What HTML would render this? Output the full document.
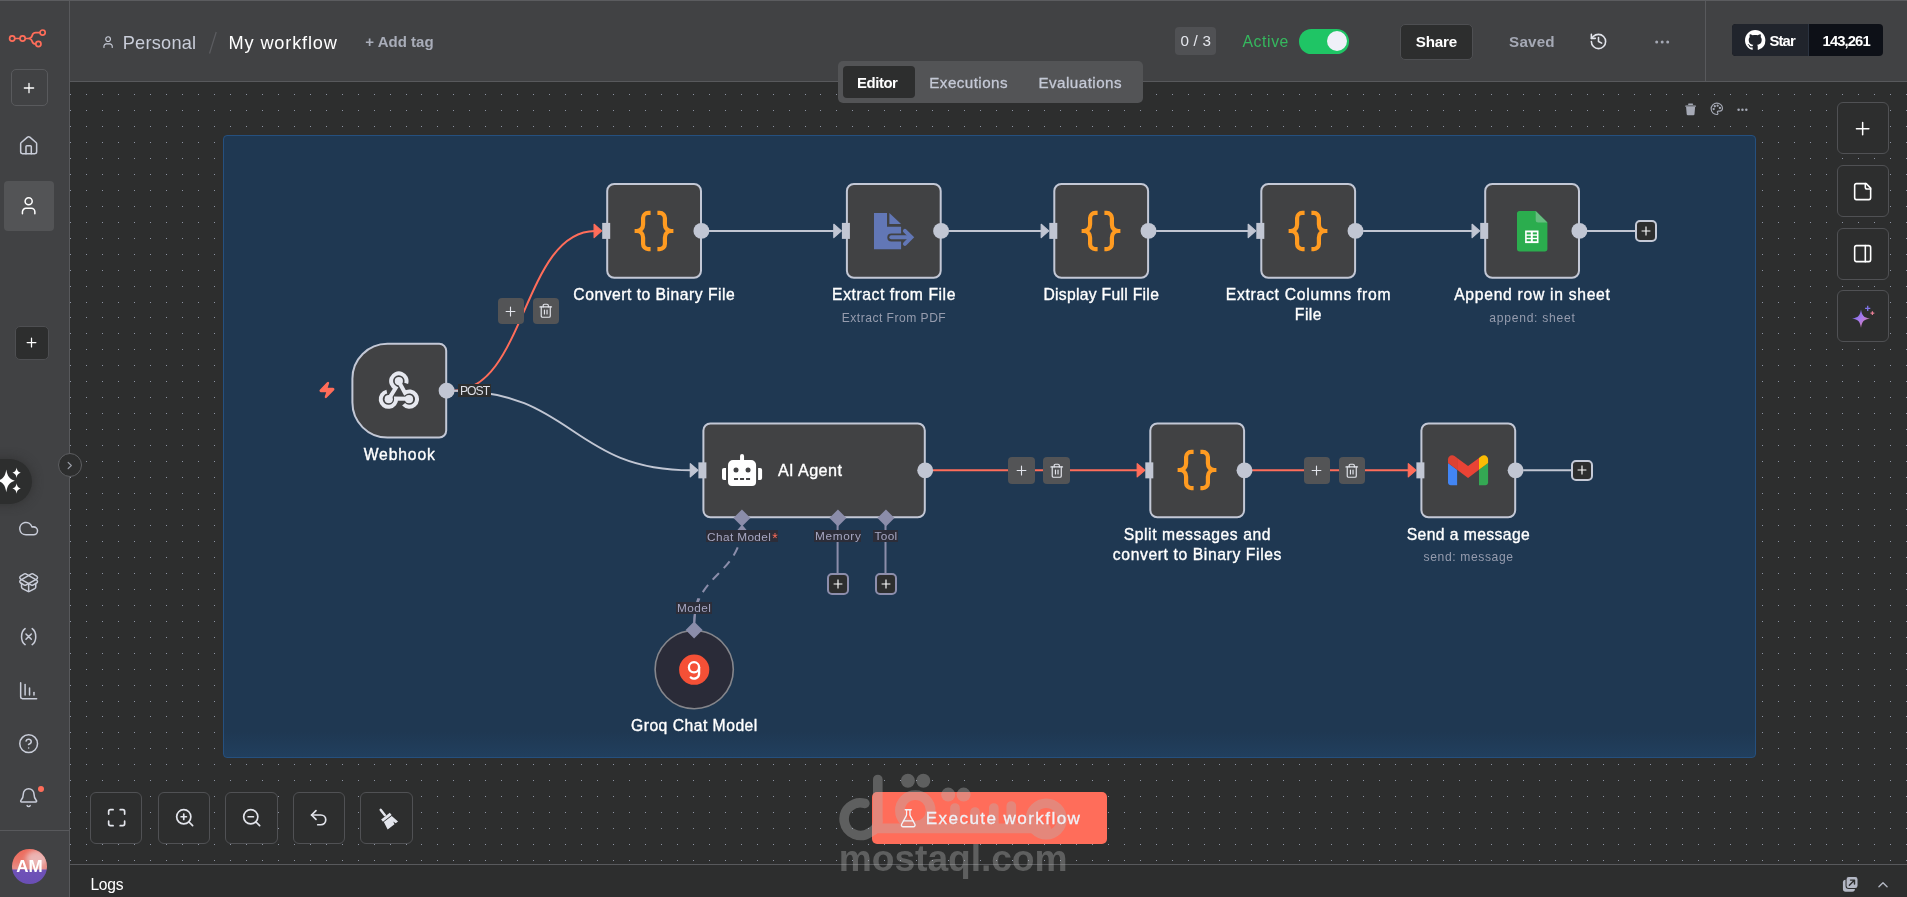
<!DOCTYPE html>
<html><head><meta charset="utf-8"><title>n8n workflow</title>
<style>
*{box-sizing:border-box;margin:0;padding:0}
html,body{width:1907px;height:897px;overflow:hidden;background:#2d2e2e;font-family:"Liberation Sans",sans-serif}
.t{position:absolute;white-space:nowrap;line-height:normal}
.a{position:absolute}
svg{position:absolute;overflow:visible}
.ic{fill:none;stroke:#c9cdd9;stroke-width:1.7;stroke-linecap:round;stroke-linejoin:round}
.node{position:absolute;background:#414244;border:2px solid #c1c6d3;border-radius:8px}
.hc{position:absolute;width:16px;height:16px;border-radius:50%;background:#c1c6d3}
.hr{position:absolute;width:8px;height:16px;background:#c1c6d3}
.eb{position:absolute;width:26.5px;height:26.5px;border-radius:4px;background:#535456}
.pb{position:absolute;width:21.7px;height:21.7px;border-radius:5px;background:#2d2e2e;border:2px solid #c5cad7}
.sq{position:absolute;width:52px;height:52px;border-radius:6px;background:#2d2e2e;border:1px solid #505154}
.lb{position:absolute;background:#2d2e3a;height:11px}
</style></head><body><div id="w" style="position:absolute;left:0;top:0;width:1907px;height:897px;will-change:transform">

<svg width="1907" height="897" style="left:0;top:0"><path d="M70 94.5h1m15 0h1m15 0h1m15 0h1m15 0h1m15 0h1m15 0h1m15 0h1m15 0h1m15 0h1m15 0h1m15 0h1m15 0h1m15 0h1m15 0h1m15 0h1m15 0h1m15 0h1m15 0h1m15 0h1m15 0h1m15 0h1m14 0h1m15 0h1m15 0h1m15 0h1m15 0h1m15 0h1m15 0h1m15 0h1m15 0h1m15 0h1m15 0h1m15 0h1m15 0h1m15 0h1m15 0h1m15 0h1m15 0h1m15 0h1m15 0h1m15 0h1m15 0h1m15 0h1m15 0h1m15 0h1m15 0h1m14 0h1m15 0h1m15 0h1m15 0h1m15 0h1m15 0h1m15 0h1m15 0h1m15 0h1m15 0h1m15 0h1m15 0h1m15 0h1m15 0h1m15 0h1m15 0h1m15 0h1m15 0h1m15 0h1m15 0h1m15 0h1m15 0h1m15 0h1m15 0h1m15 0h1m14 0h1m15 0h1m15 0h1m15 0h1m15 0h1m15 0h1m15 0h1m15 0h1m15 0h1m15 0h1m15 0h1m15 0h1m15 0h1m15 0h1m15 0h1m15 0h1m15 0h1m15 0h1m15 0h1m15 0h1m15 0h1m15 0h1m15 0h1m15 0h1m15 0h1m14 0h1m15 0h1m15 0h1m15 0h1m15 0h1m15 0h1m15 0h1m15 0h1m15 0h1m15 0h1m15 0h1m15 0h1m15 0h1m15 0h1m15 0h1m15 0h1m15 0h1m15 0h1m15 0h1M70 110.5h1m15 0h1m15 0h1m15 0h1m15 0h1m15 0h1m15 0h1m15 0h1m15 0h1m15 0h1m15 0h1m15 0h1m15 0h1m15 0h1m15 0h1m15 0h1m15 0h1m15 0h1m15 0h1m15 0h1m15 0h1m15 0h1m14 0h1m15 0h1m15 0h1m15 0h1m15 0h1m15 0h1m15 0h1m15 0h1m15 0h1m15 0h1m15 0h1m15 0h1m15 0h1m15 0h1m15 0h1m15 0h1m15 0h1m15 0h1m15 0h1m15 0h1m15 0h1m15 0h1m15 0h1m15 0h1m15 0h1m14 0h1m15 0h1m15 0h1m15 0h1m15 0h1m15 0h1m15 0h1m15 0h1m15 0h1m15 0h1m15 0h1m15 0h1m15 0h1m15 0h1m15 0h1m15 0h1m15 0h1m15 0h1m15 0h1m15 0h1m15 0h1m15 0h1m15 0h1m15 0h1m15 0h1m14 0h1m15 0h1m15 0h1m15 0h1m15 0h1m15 0h1m15 0h1m15 0h1m15 0h1m15 0h1m15 0h1m15 0h1m15 0h1m15 0h1m15 0h1m15 0h1m15 0h1m15 0h1m15 0h1m15 0h1m15 0h1m15 0h1m15 0h1m15 0h1m15 0h1m14 0h1m15 0h1m15 0h1m15 0h1m15 0h1m15 0h1m15 0h1m15 0h1m15 0h1m15 0h1m15 0h1m15 0h1m15 0h1m15 0h1m15 0h1m15 0h1m15 0h1m15 0h1m15 0h1M70 126.5h1m15 0h1m15 0h1m15 0h1m15 0h1m15 0h1m15 0h1m15 0h1m15 0h1m15 0h1m15 0h1m15 0h1m15 0h1m15 0h1m15 0h1m15 0h1m15 0h1m15 0h1m15 0h1m15 0h1m15 0h1m15 0h1m14 0h1m15 0h1m15 0h1m15 0h1m15 0h1m15 0h1m15 0h1m15 0h1m15 0h1m15 0h1m15 0h1m15 0h1m15 0h1m15 0h1m15 0h1m15 0h1m15 0h1m15 0h1m15 0h1m15 0h1m15 0h1m15 0h1m15 0h1m15 0h1m15 0h1m14 0h1m15 0h1m15 0h1m15 0h1m15 0h1m15 0h1m15 0h1m15 0h1m15 0h1m15 0h1m15 0h1m15 0h1m15 0h1m15 0h1m15 0h1m15 0h1m15 0h1m15 0h1m15 0h1m15 0h1m15 0h1m15 0h1m15 0h1m15 0h1m15 0h1m14 0h1m15 0h1m15 0h1m15 0h1m15 0h1m15 0h1m15 0h1m15 0h1m15 0h1m15 0h1m15 0h1m15 0h1m15 0h1m15 0h1m15 0h1m15 0h1m15 0h1m15 0h1m15 0h1m15 0h1m15 0h1m15 0h1m15 0h1m15 0h1m15 0h1m14 0h1m15 0h1m15 0h1m15 0h1m15 0h1m15 0h1m15 0h1m15 0h1m15 0h1m15 0h1m15 0h1m15 0h1m15 0h1m15 0h1m15 0h1m15 0h1m15 0h1m15 0h1m15 0h1M70 142.5h1m15 0h1m15 0h1m15 0h1m15 0h1m15 0h1m15 0h1m15 0h1m15 0h1m15 0h1m15 0h1m15 0h1m15 0h1m15 0h1m15 0h1m15 0h1m15 0h1m15 0h1m15 0h1m15 0h1m15 0h1m15 0h1m14 0h1m15 0h1m15 0h1m15 0h1m15 0h1m15 0h1m15 0h1m15 0h1m15 0h1m15 0h1m15 0h1m15 0h1m15 0h1m15 0h1m15 0h1m15 0h1m15 0h1m15 0h1m15 0h1m15 0h1m15 0h1m15 0h1m15 0h1m15 0h1m15 0h1m14 0h1m15 0h1m15 0h1m15 0h1m15 0h1m15 0h1m15 0h1m15 0h1m15 0h1m15 0h1m15 0h1m15 0h1m15 0h1m15 0h1m15 0h1m15 0h1m15 0h1m15 0h1m15 0h1m15 0h1m15 0h1m15 0h1m15 0h1m15 0h1m15 0h1m14 0h1m15 0h1m15 0h1m15 0h1m15 0h1m15 0h1m15 0h1m15 0h1m15 0h1m15 0h1m15 0h1m15 0h1m15 0h1m15 0h1m15 0h1m15 0h1m15 0h1m15 0h1m15 0h1m15 0h1m15 0h1m15 0h1m15 0h1m15 0h1m15 0h1m14 0h1m15 0h1m15 0h1m15 0h1m15 0h1m15 0h1m15 0h1m15 0h1m15 0h1m15 0h1m15 0h1m15 0h1m15 0h1m15 0h1m15 0h1m15 0h1m15 0h1m15 0h1m15 0h1M70 158.5h1m15 0h1m15 0h1m15 0h1m15 0h1m15 0h1m15 0h1m15 0h1m15 0h1m15 0h1m15 0h1m15 0h1m15 0h1m15 0h1m15 0h1m15 0h1m15 0h1m15 0h1m15 0h1m15 0h1m15 0h1m15 0h1m14 0h1m15 0h1m15 0h1m15 0h1m15 0h1m15 0h1m15 0h1m15 0h1m15 0h1m15 0h1m15 0h1m15 0h1m15 0h1m15 0h1m15 0h1m15 0h1m15 0h1m15 0h1m15 0h1m15 0h1m15 0h1m15 0h1m15 0h1m15 0h1m15 0h1m14 0h1m15 0h1m15 0h1m15 0h1m15 0h1m15 0h1m15 0h1m15 0h1m15 0h1m15 0h1m15 0h1m15 0h1m15 0h1m15 0h1m15 0h1m15 0h1m15 0h1m15 0h1m15 0h1m15 0h1m15 0h1m15 0h1m15 0h1m15 0h1m15 0h1m14 0h1m15 0h1m15 0h1m15 0h1m15 0h1m15 0h1m15 0h1m15 0h1m15 0h1m15 0h1m15 0h1m15 0h1m15 0h1m15 0h1m15 0h1m15 0h1m15 0h1m15 0h1m15 0h1m15 0h1m15 0h1m15 0h1m15 0h1m15 0h1m15 0h1m14 0h1m15 0h1m15 0h1m15 0h1m15 0h1m15 0h1m15 0h1m15 0h1m15 0h1m15 0h1m15 0h1m15 0h1m15 0h1m15 0h1m15 0h1m15 0h1m15 0h1m15 0h1m15 0h1M70 174.5h1m15 0h1m15 0h1m15 0h1m15 0h1m15 0h1m15 0h1m15 0h1m15 0h1m15 0h1m15 0h1m15 0h1m15 0h1m15 0h1m15 0h1m15 0h1m15 0h1m15 0h1m15 0h1m15 0h1m15 0h1m15 0h1m14 0h1m15 0h1m15 0h1m15 0h1m15 0h1m15 0h1m15 0h1m15 0h1m15 0h1m15 0h1m15 0h1m15 0h1m15 0h1m15 0h1m15 0h1m15 0h1m15 0h1m15 0h1m15 0h1m15 0h1m15 0h1m15 0h1m15 0h1m15 0h1m15 0h1m14 0h1m15 0h1m15 0h1m15 0h1m15 0h1m15 0h1m15 0h1m15 0h1m15 0h1m15 0h1m15 0h1m15 0h1m15 0h1m15 0h1m15 0h1m15 0h1m15 0h1m15 0h1m15 0h1m15 0h1m15 0h1m15 0h1m15 0h1m15 0h1m15 0h1m14 0h1m15 0h1m15 0h1m15 0h1m15 0h1m15 0h1m15 0h1m15 0h1m15 0h1m15 0h1m15 0h1m15 0h1m15 0h1m15 0h1m15 0h1m15 0h1m15 0h1m15 0h1m15 0h1m15 0h1m15 0h1m15 0h1m15 0h1m15 0h1m15 0h1m14 0h1m15 0h1m15 0h1m15 0h1m15 0h1m15 0h1m15 0h1m15 0h1m15 0h1m15 0h1m15 0h1m15 0h1m15 0h1m15 0h1m15 0h1m15 0h1m15 0h1m15 0h1m15 0h1M70 190.5h1m15 0h1m15 0h1m15 0h1m15 0h1m15 0h1m15 0h1m15 0h1m15 0h1m15 0h1m15 0h1m15 0h1m15 0h1m15 0h1m15 0h1m15 0h1m15 0h1m15 0h1m15 0h1m15 0h1m15 0h1m15 0h1m14 0h1m15 0h1m15 0h1m15 0h1m15 0h1m15 0h1m15 0h1m15 0h1m15 0h1m15 0h1m15 0h1m15 0h1m15 0h1m15 0h1m15 0h1m15 0h1m15 0h1m15 0h1m15 0h1m15 0h1m15 0h1m15 0h1m15 0h1m15 0h1m15 0h1m14 0h1m15 0h1m15 0h1m15 0h1m15 0h1m15 0h1m15 0h1m15 0h1m15 0h1m15 0h1m15 0h1m15 0h1m15 0h1m15 0h1m15 0h1m15 0h1m15 0h1m15 0h1m15 0h1m15 0h1m15 0h1m15 0h1m15 0h1m15 0h1m15 0h1m14 0h1m15 0h1m15 0h1m15 0h1m15 0h1m15 0h1m15 0h1m15 0h1m15 0h1m15 0h1m15 0h1m15 0h1m15 0h1m15 0h1m15 0h1m15 0h1m15 0h1m15 0h1m15 0h1m15 0h1m15 0h1m15 0h1m15 0h1m15 0h1m15 0h1m14 0h1m15 0h1m15 0h1m15 0h1m15 0h1m15 0h1m15 0h1m15 0h1m15 0h1m15 0h1m15 0h1m15 0h1m15 0h1m15 0h1m15 0h1m15 0h1m15 0h1m15 0h1m15 0h1M70 206.5h1m15 0h1m15 0h1m15 0h1m15 0h1m15 0h1m15 0h1m15 0h1m15 0h1m15 0h1m15 0h1m15 0h1m15 0h1m15 0h1m15 0h1m15 0h1m15 0h1m15 0h1m15 0h1m15 0h1m15 0h1m15 0h1m14 0h1m15 0h1m15 0h1m15 0h1m15 0h1m15 0h1m15 0h1m15 0h1m15 0h1m15 0h1m15 0h1m15 0h1m15 0h1m15 0h1m15 0h1m15 0h1m15 0h1m15 0h1m15 0h1m15 0h1m15 0h1m15 0h1m15 0h1m15 0h1m15 0h1m14 0h1m15 0h1m15 0h1m15 0h1m15 0h1m15 0h1m15 0h1m15 0h1m15 0h1m15 0h1m15 0h1m15 0h1m15 0h1m15 0h1m15 0h1m15 0h1m15 0h1m15 0h1m15 0h1m15 0h1m15 0h1m15 0h1m15 0h1m15 0h1m15 0h1m14 0h1m15 0h1m15 0h1m15 0h1m15 0h1m15 0h1m15 0h1m15 0h1m15 0h1m15 0h1m15 0h1m15 0h1m15 0h1m15 0h1m15 0h1m15 0h1m15 0h1m15 0h1m15 0h1m15 0h1m15 0h1m15 0h1m15 0h1m15 0h1m15 0h1m14 0h1m15 0h1m15 0h1m15 0h1m15 0h1m15 0h1m15 0h1m15 0h1m15 0h1m15 0h1m15 0h1m15 0h1m15 0h1m15 0h1m15 0h1m15 0h1m15 0h1m15 0h1m15 0h1M70 222.5h1m15 0h1m15 0h1m15 0h1m15 0h1m15 0h1m15 0h1m15 0h1m15 0h1m15 0h1m15 0h1m15 0h1m15 0h1m15 0h1m15 0h1m15 0h1m15 0h1m15 0h1m15 0h1m15 0h1m15 0h1m15 0h1m14 0h1m15 0h1m15 0h1m15 0h1m15 0h1m15 0h1m15 0h1m15 0h1m15 0h1m15 0h1m15 0h1m15 0h1m15 0h1m15 0h1m15 0h1m15 0h1m15 0h1m15 0h1m15 0h1m15 0h1m15 0h1m15 0h1m15 0h1m15 0h1m15 0h1m14 0h1m15 0h1m15 0h1m15 0h1m15 0h1m15 0h1m15 0h1m15 0h1m15 0h1m15 0h1m15 0h1m15 0h1m15 0h1m15 0h1m15 0h1m15 0h1m15 0h1m15 0h1m15 0h1m15 0h1m15 0h1m15 0h1m15 0h1m15 0h1m15 0h1m14 0h1m15 0h1m15 0h1m15 0h1m15 0h1m15 0h1m15 0h1m15 0h1m15 0h1m15 0h1m15 0h1m15 0h1m15 0h1m15 0h1m15 0h1m15 0h1m15 0h1m15 0h1m15 0h1m15 0h1m15 0h1m15 0h1m15 0h1m15 0h1m15 0h1m14 0h1m15 0h1m15 0h1m15 0h1m15 0h1m15 0h1m15 0h1m15 0h1m15 0h1m15 0h1m15 0h1m15 0h1m15 0h1m15 0h1m15 0h1m15 0h1m15 0h1m15 0h1m15 0h1M70 238.5h1m15 0h1m15 0h1m15 0h1m15 0h1m15 0h1m15 0h1m15 0h1m15 0h1m15 0h1m15 0h1m15 0h1m15 0h1m15 0h1m15 0h1m15 0h1m15 0h1m15 0h1m15 0h1m15 0h1m15 0h1m15 0h1m14 0h1m15 0h1m15 0h1m15 0h1m15 0h1m15 0h1m15 0h1m15 0h1m15 0h1m15 0h1m15 0h1m15 0h1m15 0h1m15 0h1m15 0h1m15 0h1m15 0h1m15 0h1m15 0h1m15 0h1m15 0h1m15 0h1m15 0h1m15 0h1m15 0h1m14 0h1m15 0h1m15 0h1m15 0h1m15 0h1m15 0h1m15 0h1m15 0h1m15 0h1m15 0h1m15 0h1m15 0h1m15 0h1m15 0h1m15 0h1m15 0h1m15 0h1m15 0h1m15 0h1m15 0h1m15 0h1m15 0h1m15 0h1m15 0h1m15 0h1m14 0h1m15 0h1m15 0h1m15 0h1m15 0h1m15 0h1m15 0h1m15 0h1m15 0h1m15 0h1m15 0h1m15 0h1m15 0h1m15 0h1m15 0h1m15 0h1m15 0h1m15 0h1m15 0h1m15 0h1m15 0h1m15 0h1m15 0h1m15 0h1m15 0h1m14 0h1m15 0h1m15 0h1m15 0h1m15 0h1m15 0h1m15 0h1m15 0h1m15 0h1m15 0h1m15 0h1m15 0h1m15 0h1m15 0h1m15 0h1m15 0h1m15 0h1m15 0h1m15 0h1M70 254.5h1m15 0h1m15 0h1m15 0h1m15 0h1m15 0h1m15 0h1m15 0h1m15 0h1m15 0h1m15 0h1m15 0h1m15 0h1m15 0h1m15 0h1m15 0h1m15 0h1m15 0h1m15 0h1m15 0h1m15 0h1m15 0h1m14 0h1m15 0h1m15 0h1m15 0h1m15 0h1m15 0h1m15 0h1m15 0h1m15 0h1m15 0h1m15 0h1m15 0h1m15 0h1m15 0h1m15 0h1m15 0h1m15 0h1m15 0h1m15 0h1m15 0h1m15 0h1m15 0h1m15 0h1m15 0h1m15 0h1m14 0h1m15 0h1m15 0h1m15 0h1m15 0h1m15 0h1m15 0h1m15 0h1m15 0h1m15 0h1m15 0h1m15 0h1m15 0h1m15 0h1m15 0h1m15 0h1m15 0h1m15 0h1m15 0h1m15 0h1m15 0h1m15 0h1m15 0h1m15 0h1m15 0h1m14 0h1m15 0h1m15 0h1m15 0h1m15 0h1m15 0h1m15 0h1m15 0h1m15 0h1m15 0h1m15 0h1m15 0h1m15 0h1m15 0h1m15 0h1m15 0h1m15 0h1m15 0h1m15 0h1m15 0h1m15 0h1m15 0h1m15 0h1m15 0h1m15 0h1m14 0h1m15 0h1m15 0h1m15 0h1m15 0h1m15 0h1m15 0h1m15 0h1m15 0h1m15 0h1m15 0h1m15 0h1m15 0h1m15 0h1m15 0h1m15 0h1m15 0h1m15 0h1m15 0h1M70 270.5h1m15 0h1m15 0h1m15 0h1m15 0h1m15 0h1m15 0h1m15 0h1m15 0h1m15 0h1m15 0h1m15 0h1m15 0h1m15 0h1m15 0h1m15 0h1m15 0h1m15 0h1m15 0h1m15 0h1m15 0h1m15 0h1m14 0h1m15 0h1m15 0h1m15 0h1m15 0h1m15 0h1m15 0h1m15 0h1m15 0h1m15 0h1m15 0h1m15 0h1m15 0h1m15 0h1m15 0h1m15 0h1m15 0h1m15 0h1m15 0h1m15 0h1m15 0h1m15 0h1m15 0h1m15 0h1m15 0h1m14 0h1m15 0h1m15 0h1m15 0h1m15 0h1m15 0h1m15 0h1m15 0h1m15 0h1m15 0h1m15 0h1m15 0h1m15 0h1m15 0h1m15 0h1m15 0h1m15 0h1m15 0h1m15 0h1m15 0h1m15 0h1m15 0h1m15 0h1m15 0h1m15 0h1m14 0h1m15 0h1m15 0h1m15 0h1m15 0h1m15 0h1m15 0h1m15 0h1m15 0h1m15 0h1m15 0h1m15 0h1m15 0h1m15 0h1m15 0h1m15 0h1m15 0h1m15 0h1m15 0h1m15 0h1m15 0h1m15 0h1m15 0h1m15 0h1m15 0h1m14 0h1m15 0h1m15 0h1m15 0h1m15 0h1m15 0h1m15 0h1m15 0h1m15 0h1m15 0h1m15 0h1m15 0h1m15 0h1m15 0h1m15 0h1m15 0h1m15 0h1m15 0h1m15 0h1M70 286.5h1m15 0h1m15 0h1m15 0h1m15 0h1m15 0h1m15 0h1m15 0h1m15 0h1m15 0h1m15 0h1m15 0h1m15 0h1m15 0h1m15 0h1m15 0h1m15 0h1m15 0h1m15 0h1m15 0h1m15 0h1m15 0h1m14 0h1m15 0h1m15 0h1m15 0h1m15 0h1m15 0h1m15 0h1m15 0h1m15 0h1m15 0h1m15 0h1m15 0h1m15 0h1m15 0h1m15 0h1m15 0h1m15 0h1m15 0h1m15 0h1m15 0h1m15 0h1m15 0h1m15 0h1m15 0h1m15 0h1m14 0h1m15 0h1m15 0h1m15 0h1m15 0h1m15 0h1m15 0h1m15 0h1m15 0h1m15 0h1m15 0h1m15 0h1m15 0h1m15 0h1m15 0h1m15 0h1m15 0h1m15 0h1m15 0h1m15 0h1m15 0h1m15 0h1m15 0h1m15 0h1m15 0h1m14 0h1m15 0h1m15 0h1m15 0h1m15 0h1m15 0h1m15 0h1m15 0h1m15 0h1m15 0h1m15 0h1m15 0h1m15 0h1m15 0h1m15 0h1m15 0h1m15 0h1m15 0h1m15 0h1m15 0h1m15 0h1m15 0h1m15 0h1m15 0h1m15 0h1m14 0h1m15 0h1m15 0h1m15 0h1m15 0h1m15 0h1m15 0h1m15 0h1m15 0h1m15 0h1m15 0h1m15 0h1m15 0h1m15 0h1m15 0h1m15 0h1m15 0h1m15 0h1m15 0h1M70 302.5h1m15 0h1m15 0h1m15 0h1m15 0h1m15 0h1m15 0h1m15 0h1m15 0h1m15 0h1m15 0h1m15 0h1m15 0h1m15 0h1m15 0h1m15 0h1m15 0h1m15 0h1m15 0h1m15 0h1m15 0h1m15 0h1m14 0h1m15 0h1m15 0h1m15 0h1m15 0h1m15 0h1m15 0h1m15 0h1m15 0h1m15 0h1m15 0h1m15 0h1m15 0h1m15 0h1m15 0h1m15 0h1m15 0h1m15 0h1m15 0h1m15 0h1m15 0h1m15 0h1m15 0h1m15 0h1m15 0h1m14 0h1m15 0h1m15 0h1m15 0h1m15 0h1m15 0h1m15 0h1m15 0h1m15 0h1m15 0h1m15 0h1m15 0h1m15 0h1m15 0h1m15 0h1m15 0h1m15 0h1m15 0h1m15 0h1m15 0h1m15 0h1m15 0h1m15 0h1m15 0h1m15 0h1m14 0h1m15 0h1m15 0h1m15 0h1m15 0h1m15 0h1m15 0h1m15 0h1m15 0h1m15 0h1m15 0h1m15 0h1m15 0h1m15 0h1m15 0h1m15 0h1m15 0h1m15 0h1m15 0h1m15 0h1m15 0h1m15 0h1m15 0h1m15 0h1m15 0h1m14 0h1m15 0h1m15 0h1m15 0h1m15 0h1m15 0h1m15 0h1m15 0h1m15 0h1m15 0h1m15 0h1m15 0h1m15 0h1m15 0h1m15 0h1m15 0h1m15 0h1m15 0h1m15 0h1M70 317.5h1m15 0h1m15 0h1m15 0h1m15 0h1m15 0h1m15 0h1m15 0h1m15 0h1m15 0h1m15 0h1m15 0h1m15 0h1m15 0h1m15 0h1m15 0h1m15 0h1m15 0h1m15 0h1m15 0h1m15 0h1m15 0h1m14 0h1m15 0h1m15 0h1m15 0h1m15 0h1m15 0h1m15 0h1m15 0h1m15 0h1m15 0h1m15 0h1m15 0h1m15 0h1m15 0h1m15 0h1m15 0h1m15 0h1m15 0h1m15 0h1m15 0h1m15 0h1m15 0h1m15 0h1m15 0h1m15 0h1m14 0h1m15 0h1m15 0h1m15 0h1m15 0h1m15 0h1m15 0h1m15 0h1m15 0h1m15 0h1m15 0h1m15 0h1m15 0h1m15 0h1m15 0h1m15 0h1m15 0h1m15 0h1m15 0h1m15 0h1m15 0h1m15 0h1m15 0h1m15 0h1m15 0h1m14 0h1m15 0h1m15 0h1m15 0h1m15 0h1m15 0h1m15 0h1m15 0h1m15 0h1m15 0h1m15 0h1m15 0h1m15 0h1m15 0h1m15 0h1m15 0h1m15 0h1m15 0h1m15 0h1m15 0h1m15 0h1m15 0h1m15 0h1m15 0h1m15 0h1m14 0h1m15 0h1m15 0h1m15 0h1m15 0h1m15 0h1m15 0h1m15 0h1m15 0h1m15 0h1m15 0h1m15 0h1m15 0h1m15 0h1m15 0h1m15 0h1m15 0h1m15 0h1m15 0h1M70 333.5h1m15 0h1m15 0h1m15 0h1m15 0h1m15 0h1m15 0h1m15 0h1m15 0h1m15 0h1m15 0h1m15 0h1m15 0h1m15 0h1m15 0h1m15 0h1m15 0h1m15 0h1m15 0h1m15 0h1m15 0h1m15 0h1m14 0h1m15 0h1m15 0h1m15 0h1m15 0h1m15 0h1m15 0h1m15 0h1m15 0h1m15 0h1m15 0h1m15 0h1m15 0h1m15 0h1m15 0h1m15 0h1m15 0h1m15 0h1m15 0h1m15 0h1m15 0h1m15 0h1m15 0h1m15 0h1m15 0h1m14 0h1m15 0h1m15 0h1m15 0h1m15 0h1m15 0h1m15 0h1m15 0h1m15 0h1m15 0h1m15 0h1m15 0h1m15 0h1m15 0h1m15 0h1m15 0h1m15 0h1m15 0h1m15 0h1m15 0h1m15 0h1m15 0h1m15 0h1m15 0h1m15 0h1m14 0h1m15 0h1m15 0h1m15 0h1m15 0h1m15 0h1m15 0h1m15 0h1m15 0h1m15 0h1m15 0h1m15 0h1m15 0h1m15 0h1m15 0h1m15 0h1m15 0h1m15 0h1m15 0h1m15 0h1m15 0h1m15 0h1m15 0h1m15 0h1m15 0h1m14 0h1m15 0h1m15 0h1m15 0h1m15 0h1m15 0h1m15 0h1m15 0h1m15 0h1m15 0h1m15 0h1m15 0h1m15 0h1m15 0h1m15 0h1m15 0h1m15 0h1m15 0h1m15 0h1M70 349.5h1m15 0h1m15 0h1m15 0h1m15 0h1m15 0h1m15 0h1m15 0h1m15 0h1m15 0h1m15 0h1m15 0h1m15 0h1m15 0h1m15 0h1m15 0h1m15 0h1m15 0h1m15 0h1m15 0h1m15 0h1m15 0h1m14 0h1m15 0h1m15 0h1m15 0h1m15 0h1m15 0h1m15 0h1m15 0h1m15 0h1m15 0h1m15 0h1m15 0h1m15 0h1m15 0h1m15 0h1m15 0h1m15 0h1m15 0h1m15 0h1m15 0h1m15 0h1m15 0h1m15 0h1m15 0h1m15 0h1m14 0h1m15 0h1m15 0h1m15 0h1m15 0h1m15 0h1m15 0h1m15 0h1m15 0h1m15 0h1m15 0h1m15 0h1m15 0h1m15 0h1m15 0h1m15 0h1m15 0h1m15 0h1m15 0h1m15 0h1m15 0h1m15 0h1m15 0h1m15 0h1m15 0h1m14 0h1m15 0h1m15 0h1m15 0h1m15 0h1m15 0h1m15 0h1m15 0h1m15 0h1m15 0h1m15 0h1m15 0h1m15 0h1m15 0h1m15 0h1m15 0h1m15 0h1m15 0h1m15 0h1m15 0h1m15 0h1m15 0h1m15 0h1m15 0h1m15 0h1m14 0h1m15 0h1m15 0h1m15 0h1m15 0h1m15 0h1m15 0h1m15 0h1m15 0h1m15 0h1m15 0h1m15 0h1m15 0h1m15 0h1m15 0h1m15 0h1m15 0h1m15 0h1m15 0h1M70 365.5h1m15 0h1m15 0h1m15 0h1m15 0h1m15 0h1m15 0h1m15 0h1m15 0h1m15 0h1m15 0h1m15 0h1m15 0h1m15 0h1m15 0h1m15 0h1m15 0h1m15 0h1m15 0h1m15 0h1m15 0h1m15 0h1m14 0h1m15 0h1m15 0h1m15 0h1m15 0h1m15 0h1m15 0h1m15 0h1m15 0h1m15 0h1m15 0h1m15 0h1m15 0h1m15 0h1m15 0h1m15 0h1m15 0h1m15 0h1m15 0h1m15 0h1m15 0h1m15 0h1m15 0h1m15 0h1m15 0h1m14 0h1m15 0h1m15 0h1m15 0h1m15 0h1m15 0h1m15 0h1m15 0h1m15 0h1m15 0h1m15 0h1m15 0h1m15 0h1m15 0h1m15 0h1m15 0h1m15 0h1m15 0h1m15 0h1m15 0h1m15 0h1m15 0h1m15 0h1m15 0h1m15 0h1m14 0h1m15 0h1m15 0h1m15 0h1m15 0h1m15 0h1m15 0h1m15 0h1m15 0h1m15 0h1m15 0h1m15 0h1m15 0h1m15 0h1m15 0h1m15 0h1m15 0h1m15 0h1m15 0h1m15 0h1m15 0h1m15 0h1m15 0h1m15 0h1m15 0h1m14 0h1m15 0h1m15 0h1m15 0h1m15 0h1m15 0h1m15 0h1m15 0h1m15 0h1m15 0h1m15 0h1m15 0h1m15 0h1m15 0h1m15 0h1m15 0h1m15 0h1m15 0h1m15 0h1M70 381.5h1m15 0h1m15 0h1m15 0h1m15 0h1m15 0h1m15 0h1m15 0h1m15 0h1m15 0h1m15 0h1m15 0h1m15 0h1m15 0h1m15 0h1m15 0h1m15 0h1m15 0h1m15 0h1m15 0h1m15 0h1m15 0h1m14 0h1m15 0h1m15 0h1m15 0h1m15 0h1m15 0h1m15 0h1m15 0h1m15 0h1m15 0h1m15 0h1m15 0h1m15 0h1m15 0h1m15 0h1m15 0h1m15 0h1m15 0h1m15 0h1m15 0h1m15 0h1m15 0h1m15 0h1m15 0h1m15 0h1m14 0h1m15 0h1m15 0h1m15 0h1m15 0h1m15 0h1m15 0h1m15 0h1m15 0h1m15 0h1m15 0h1m15 0h1m15 0h1m15 0h1m15 0h1m15 0h1m15 0h1m15 0h1m15 0h1m15 0h1m15 0h1m15 0h1m15 0h1m15 0h1m15 0h1m14 0h1m15 0h1m15 0h1m15 0h1m15 0h1m15 0h1m15 0h1m15 0h1m15 0h1m15 0h1m15 0h1m15 0h1m15 0h1m15 0h1m15 0h1m15 0h1m15 0h1m15 0h1m15 0h1m15 0h1m15 0h1m15 0h1m15 0h1m15 0h1m15 0h1m14 0h1m15 0h1m15 0h1m15 0h1m15 0h1m15 0h1m15 0h1m15 0h1m15 0h1m15 0h1m15 0h1m15 0h1m15 0h1m15 0h1m15 0h1m15 0h1m15 0h1m15 0h1m15 0h1M70 397.5h1m15 0h1m15 0h1m15 0h1m15 0h1m15 0h1m15 0h1m15 0h1m15 0h1m15 0h1m15 0h1m15 0h1m15 0h1m15 0h1m15 0h1m15 0h1m15 0h1m15 0h1m15 0h1m15 0h1m15 0h1m15 0h1m14 0h1m15 0h1m15 0h1m15 0h1m15 0h1m15 0h1m15 0h1m15 0h1m15 0h1m15 0h1m15 0h1m15 0h1m15 0h1m15 0h1m15 0h1m15 0h1m15 0h1m15 0h1m15 0h1m15 0h1m15 0h1m15 0h1m15 0h1m15 0h1m15 0h1m14 0h1m15 0h1m15 0h1m15 0h1m15 0h1m15 0h1m15 0h1m15 0h1m15 0h1m15 0h1m15 0h1m15 0h1m15 0h1m15 0h1m15 0h1m15 0h1m15 0h1m15 0h1m15 0h1m15 0h1m15 0h1m15 0h1m15 0h1m15 0h1m15 0h1m14 0h1m15 0h1m15 0h1m15 0h1m15 0h1m15 0h1m15 0h1m15 0h1m15 0h1m15 0h1m15 0h1m15 0h1m15 0h1m15 0h1m15 0h1m15 0h1m15 0h1m15 0h1m15 0h1m15 0h1m15 0h1m15 0h1m15 0h1m15 0h1m15 0h1m14 0h1m15 0h1m15 0h1m15 0h1m15 0h1m15 0h1m15 0h1m15 0h1m15 0h1m15 0h1m15 0h1m15 0h1m15 0h1m15 0h1m15 0h1m15 0h1m15 0h1m15 0h1m15 0h1M70 413.5h1m15 0h1m15 0h1m15 0h1m15 0h1m15 0h1m15 0h1m15 0h1m15 0h1m15 0h1m15 0h1m15 0h1m15 0h1m15 0h1m15 0h1m15 0h1m15 0h1m15 0h1m15 0h1m15 0h1m15 0h1m15 0h1m14 0h1m15 0h1m15 0h1m15 0h1m15 0h1m15 0h1m15 0h1m15 0h1m15 0h1m15 0h1m15 0h1m15 0h1m15 0h1m15 0h1m15 0h1m15 0h1m15 0h1m15 0h1m15 0h1m15 0h1m15 0h1m15 0h1m15 0h1m15 0h1m15 0h1m14 0h1m15 0h1m15 0h1m15 0h1m15 0h1m15 0h1m15 0h1m15 0h1m15 0h1m15 0h1m15 0h1m15 0h1m15 0h1m15 0h1m15 0h1m15 0h1m15 0h1m15 0h1m15 0h1m15 0h1m15 0h1m15 0h1m15 0h1m15 0h1m15 0h1m14 0h1m15 0h1m15 0h1m15 0h1m15 0h1m15 0h1m15 0h1m15 0h1m15 0h1m15 0h1m15 0h1m15 0h1m15 0h1m15 0h1m15 0h1m15 0h1m15 0h1m15 0h1m15 0h1m15 0h1m15 0h1m15 0h1m15 0h1m15 0h1m15 0h1m14 0h1m15 0h1m15 0h1m15 0h1m15 0h1m15 0h1m15 0h1m15 0h1m15 0h1m15 0h1m15 0h1m15 0h1m15 0h1m15 0h1m15 0h1m15 0h1m15 0h1m15 0h1m15 0h1M70 429.5h1m15 0h1m15 0h1m15 0h1m15 0h1m15 0h1m15 0h1m15 0h1m15 0h1m15 0h1m15 0h1m15 0h1m15 0h1m15 0h1m15 0h1m15 0h1m15 0h1m15 0h1m15 0h1m15 0h1m15 0h1m15 0h1m14 0h1m15 0h1m15 0h1m15 0h1m15 0h1m15 0h1m15 0h1m15 0h1m15 0h1m15 0h1m15 0h1m15 0h1m15 0h1m15 0h1m15 0h1m15 0h1m15 0h1m15 0h1m15 0h1m15 0h1m15 0h1m15 0h1m15 0h1m15 0h1m15 0h1m14 0h1m15 0h1m15 0h1m15 0h1m15 0h1m15 0h1m15 0h1m15 0h1m15 0h1m15 0h1m15 0h1m15 0h1m15 0h1m15 0h1m15 0h1m15 0h1m15 0h1m15 0h1m15 0h1m15 0h1m15 0h1m15 0h1m15 0h1m15 0h1m15 0h1m14 0h1m15 0h1m15 0h1m15 0h1m15 0h1m15 0h1m15 0h1m15 0h1m15 0h1m15 0h1m15 0h1m15 0h1m15 0h1m15 0h1m15 0h1m15 0h1m15 0h1m15 0h1m15 0h1m15 0h1m15 0h1m15 0h1m15 0h1m15 0h1m15 0h1m14 0h1m15 0h1m15 0h1m15 0h1m15 0h1m15 0h1m15 0h1m15 0h1m15 0h1m15 0h1m15 0h1m15 0h1m15 0h1m15 0h1m15 0h1m15 0h1m15 0h1m15 0h1m15 0h1M70 445.5h1m15 0h1m15 0h1m15 0h1m15 0h1m15 0h1m15 0h1m15 0h1m15 0h1m15 0h1m15 0h1m15 0h1m15 0h1m15 0h1m15 0h1m15 0h1m15 0h1m15 0h1m15 0h1m15 0h1m15 0h1m15 0h1m14 0h1m15 0h1m15 0h1m15 0h1m15 0h1m15 0h1m15 0h1m15 0h1m15 0h1m15 0h1m15 0h1m15 0h1m15 0h1m15 0h1m15 0h1m15 0h1m15 0h1m15 0h1m15 0h1m15 0h1m15 0h1m15 0h1m15 0h1m15 0h1m15 0h1m14 0h1m15 0h1m15 0h1m15 0h1m15 0h1m15 0h1m15 0h1m15 0h1m15 0h1m15 0h1m15 0h1m15 0h1m15 0h1m15 0h1m15 0h1m15 0h1m15 0h1m15 0h1m15 0h1m15 0h1m15 0h1m15 0h1m15 0h1m15 0h1m15 0h1m14 0h1m15 0h1m15 0h1m15 0h1m15 0h1m15 0h1m15 0h1m15 0h1m15 0h1m15 0h1m15 0h1m15 0h1m15 0h1m15 0h1m15 0h1m15 0h1m15 0h1m15 0h1m15 0h1m15 0h1m15 0h1m15 0h1m15 0h1m15 0h1m15 0h1m14 0h1m15 0h1m15 0h1m15 0h1m15 0h1m15 0h1m15 0h1m15 0h1m15 0h1m15 0h1m15 0h1m15 0h1m15 0h1m15 0h1m15 0h1m15 0h1m15 0h1m15 0h1m15 0h1M70 461.5h1m15 0h1m15 0h1m15 0h1m15 0h1m15 0h1m15 0h1m15 0h1m15 0h1m15 0h1m15 0h1m15 0h1m15 0h1m15 0h1m15 0h1m15 0h1m15 0h1m15 0h1m15 0h1m15 0h1m15 0h1m15 0h1m14 0h1m15 0h1m15 0h1m15 0h1m15 0h1m15 0h1m15 0h1m15 0h1m15 0h1m15 0h1m15 0h1m15 0h1m15 0h1m15 0h1m15 0h1m15 0h1m15 0h1m15 0h1m15 0h1m15 0h1m15 0h1m15 0h1m15 0h1m15 0h1m15 0h1m14 0h1m15 0h1m15 0h1m15 0h1m15 0h1m15 0h1m15 0h1m15 0h1m15 0h1m15 0h1m15 0h1m15 0h1m15 0h1m15 0h1m15 0h1m15 0h1m15 0h1m15 0h1m15 0h1m15 0h1m15 0h1m15 0h1m15 0h1m15 0h1m15 0h1m14 0h1m15 0h1m15 0h1m15 0h1m15 0h1m15 0h1m15 0h1m15 0h1m15 0h1m15 0h1m15 0h1m15 0h1m15 0h1m15 0h1m15 0h1m15 0h1m15 0h1m15 0h1m15 0h1m15 0h1m15 0h1m15 0h1m15 0h1m15 0h1m15 0h1m14 0h1m15 0h1m15 0h1m15 0h1m15 0h1m15 0h1m15 0h1m15 0h1m15 0h1m15 0h1m15 0h1m15 0h1m15 0h1m15 0h1m15 0h1m15 0h1m15 0h1m15 0h1m15 0h1M70 477.5h1m15 0h1m15 0h1m15 0h1m15 0h1m15 0h1m15 0h1m15 0h1m15 0h1m15 0h1m15 0h1m15 0h1m15 0h1m15 0h1m15 0h1m15 0h1m15 0h1m15 0h1m15 0h1m15 0h1m15 0h1m15 0h1m14 0h1m15 0h1m15 0h1m15 0h1m15 0h1m15 0h1m15 0h1m15 0h1m15 0h1m15 0h1m15 0h1m15 0h1m15 0h1m15 0h1m15 0h1m15 0h1m15 0h1m15 0h1m15 0h1m15 0h1m15 0h1m15 0h1m15 0h1m15 0h1m15 0h1m14 0h1m15 0h1m15 0h1m15 0h1m15 0h1m15 0h1m15 0h1m15 0h1m15 0h1m15 0h1m15 0h1m15 0h1m15 0h1m15 0h1m15 0h1m15 0h1m15 0h1m15 0h1m15 0h1m15 0h1m15 0h1m15 0h1m15 0h1m15 0h1m15 0h1m14 0h1m15 0h1m15 0h1m15 0h1m15 0h1m15 0h1m15 0h1m15 0h1m15 0h1m15 0h1m15 0h1m15 0h1m15 0h1m15 0h1m15 0h1m15 0h1m15 0h1m15 0h1m15 0h1m15 0h1m15 0h1m15 0h1m15 0h1m15 0h1m15 0h1m14 0h1m15 0h1m15 0h1m15 0h1m15 0h1m15 0h1m15 0h1m15 0h1m15 0h1m15 0h1m15 0h1m15 0h1m15 0h1m15 0h1m15 0h1m15 0h1m15 0h1m15 0h1m15 0h1M70 493.5h1m15 0h1m15 0h1m15 0h1m15 0h1m15 0h1m15 0h1m15 0h1m15 0h1m15 0h1m15 0h1m15 0h1m15 0h1m15 0h1m15 0h1m15 0h1m15 0h1m15 0h1m15 0h1m15 0h1m15 0h1m15 0h1m14 0h1m15 0h1m15 0h1m15 0h1m15 0h1m15 0h1m15 0h1m15 0h1m15 0h1m15 0h1m15 0h1m15 0h1m15 0h1m15 0h1m15 0h1m15 0h1m15 0h1m15 0h1m15 0h1m15 0h1m15 0h1m15 0h1m15 0h1m15 0h1m15 0h1m14 0h1m15 0h1m15 0h1m15 0h1m15 0h1m15 0h1m15 0h1m15 0h1m15 0h1m15 0h1m15 0h1m15 0h1m15 0h1m15 0h1m15 0h1m15 0h1m15 0h1m15 0h1m15 0h1m15 0h1m15 0h1m15 0h1m15 0h1m15 0h1m15 0h1m14 0h1m15 0h1m15 0h1m15 0h1m15 0h1m15 0h1m15 0h1m15 0h1m15 0h1m15 0h1m15 0h1m15 0h1m15 0h1m15 0h1m15 0h1m15 0h1m15 0h1m15 0h1m15 0h1m15 0h1m15 0h1m15 0h1m15 0h1m15 0h1m15 0h1m14 0h1m15 0h1m15 0h1m15 0h1m15 0h1m15 0h1m15 0h1m15 0h1m15 0h1m15 0h1m15 0h1m15 0h1m15 0h1m15 0h1m15 0h1m15 0h1m15 0h1m15 0h1m15 0h1M70 509.5h1m15 0h1m15 0h1m15 0h1m15 0h1m15 0h1m15 0h1m15 0h1m15 0h1m15 0h1m15 0h1m15 0h1m15 0h1m15 0h1m15 0h1m15 0h1m15 0h1m15 0h1m15 0h1m15 0h1m15 0h1m15 0h1m14 0h1m15 0h1m15 0h1m15 0h1m15 0h1m15 0h1m15 0h1m15 0h1m15 0h1m15 0h1m15 0h1m15 0h1m15 0h1m15 0h1m15 0h1m15 0h1m15 0h1m15 0h1m15 0h1m15 0h1m15 0h1m15 0h1m15 0h1m15 0h1m15 0h1m14 0h1m15 0h1m15 0h1m15 0h1m15 0h1m15 0h1m15 0h1m15 0h1m15 0h1m15 0h1m15 0h1m15 0h1m15 0h1m15 0h1m15 0h1m15 0h1m15 0h1m15 0h1m15 0h1m15 0h1m15 0h1m15 0h1m15 0h1m15 0h1m15 0h1m14 0h1m15 0h1m15 0h1m15 0h1m15 0h1m15 0h1m15 0h1m15 0h1m15 0h1m15 0h1m15 0h1m15 0h1m15 0h1m15 0h1m15 0h1m15 0h1m15 0h1m15 0h1m15 0h1m15 0h1m15 0h1m15 0h1m15 0h1m15 0h1m15 0h1m14 0h1m15 0h1m15 0h1m15 0h1m15 0h1m15 0h1m15 0h1m15 0h1m15 0h1m15 0h1m15 0h1m15 0h1m15 0h1m15 0h1m15 0h1m15 0h1m15 0h1m15 0h1m15 0h1M70 525.5h1m15 0h1m15 0h1m15 0h1m15 0h1m15 0h1m15 0h1m15 0h1m15 0h1m15 0h1m15 0h1m15 0h1m15 0h1m15 0h1m15 0h1m15 0h1m15 0h1m15 0h1m15 0h1m15 0h1m15 0h1m15 0h1m14 0h1m15 0h1m15 0h1m15 0h1m15 0h1m15 0h1m15 0h1m15 0h1m15 0h1m15 0h1m15 0h1m15 0h1m15 0h1m15 0h1m15 0h1m15 0h1m15 0h1m15 0h1m15 0h1m15 0h1m15 0h1m15 0h1m15 0h1m15 0h1m15 0h1m14 0h1m15 0h1m15 0h1m15 0h1m15 0h1m15 0h1m15 0h1m15 0h1m15 0h1m15 0h1m15 0h1m15 0h1m15 0h1m15 0h1m15 0h1m15 0h1m15 0h1m15 0h1m15 0h1m15 0h1m15 0h1m15 0h1m15 0h1m15 0h1m15 0h1m14 0h1m15 0h1m15 0h1m15 0h1m15 0h1m15 0h1m15 0h1m15 0h1m15 0h1m15 0h1m15 0h1m15 0h1m15 0h1m15 0h1m15 0h1m15 0h1m15 0h1m15 0h1m15 0h1m15 0h1m15 0h1m15 0h1m15 0h1m15 0h1m15 0h1m14 0h1m15 0h1m15 0h1m15 0h1m15 0h1m15 0h1m15 0h1m15 0h1m15 0h1m15 0h1m15 0h1m15 0h1m15 0h1m15 0h1m15 0h1m15 0h1m15 0h1m15 0h1m15 0h1M70 541.5h1m15 0h1m15 0h1m15 0h1m15 0h1m15 0h1m15 0h1m15 0h1m15 0h1m15 0h1m15 0h1m15 0h1m15 0h1m15 0h1m15 0h1m15 0h1m15 0h1m15 0h1m15 0h1m15 0h1m15 0h1m15 0h1m14 0h1m15 0h1m15 0h1m15 0h1m15 0h1m15 0h1m15 0h1m15 0h1m15 0h1m15 0h1m15 0h1m15 0h1m15 0h1m15 0h1m15 0h1m15 0h1m15 0h1m15 0h1m15 0h1m15 0h1m15 0h1m15 0h1m15 0h1m15 0h1m15 0h1m14 0h1m15 0h1m15 0h1m15 0h1m15 0h1m15 0h1m15 0h1m15 0h1m15 0h1m15 0h1m15 0h1m15 0h1m15 0h1m15 0h1m15 0h1m15 0h1m15 0h1m15 0h1m15 0h1m15 0h1m15 0h1m15 0h1m15 0h1m15 0h1m15 0h1m14 0h1m15 0h1m15 0h1m15 0h1m15 0h1m15 0h1m15 0h1m15 0h1m15 0h1m15 0h1m15 0h1m15 0h1m15 0h1m15 0h1m15 0h1m15 0h1m15 0h1m15 0h1m15 0h1m15 0h1m15 0h1m15 0h1m15 0h1m15 0h1m15 0h1m14 0h1m15 0h1m15 0h1m15 0h1m15 0h1m15 0h1m15 0h1m15 0h1m15 0h1m15 0h1m15 0h1m15 0h1m15 0h1m15 0h1m15 0h1m15 0h1m15 0h1m15 0h1m15 0h1M70 557.5h1m15 0h1m15 0h1m15 0h1m15 0h1m15 0h1m15 0h1m15 0h1m15 0h1m15 0h1m15 0h1m15 0h1m15 0h1m15 0h1m15 0h1m15 0h1m15 0h1m15 0h1m15 0h1m15 0h1m15 0h1m15 0h1m14 0h1m15 0h1m15 0h1m15 0h1m15 0h1m15 0h1m15 0h1m15 0h1m15 0h1m15 0h1m15 0h1m15 0h1m15 0h1m15 0h1m15 0h1m15 0h1m15 0h1m15 0h1m15 0h1m15 0h1m15 0h1m15 0h1m15 0h1m15 0h1m15 0h1m14 0h1m15 0h1m15 0h1m15 0h1m15 0h1m15 0h1m15 0h1m15 0h1m15 0h1m15 0h1m15 0h1m15 0h1m15 0h1m15 0h1m15 0h1m15 0h1m15 0h1m15 0h1m15 0h1m15 0h1m15 0h1m15 0h1m15 0h1m15 0h1m15 0h1m14 0h1m15 0h1m15 0h1m15 0h1m15 0h1m15 0h1m15 0h1m15 0h1m15 0h1m15 0h1m15 0h1m15 0h1m15 0h1m15 0h1m15 0h1m15 0h1m15 0h1m15 0h1m15 0h1m15 0h1m15 0h1m15 0h1m15 0h1m15 0h1m15 0h1m14 0h1m15 0h1m15 0h1m15 0h1m15 0h1m15 0h1m15 0h1m15 0h1m15 0h1m15 0h1m15 0h1m15 0h1m15 0h1m15 0h1m15 0h1m15 0h1m15 0h1m15 0h1m15 0h1M70 573.5h1m15 0h1m15 0h1m15 0h1m15 0h1m15 0h1m15 0h1m15 0h1m15 0h1m15 0h1m15 0h1m15 0h1m15 0h1m15 0h1m15 0h1m15 0h1m15 0h1m15 0h1m15 0h1m15 0h1m15 0h1m15 0h1m14 0h1m15 0h1m15 0h1m15 0h1m15 0h1m15 0h1m15 0h1m15 0h1m15 0h1m15 0h1m15 0h1m15 0h1m15 0h1m15 0h1m15 0h1m15 0h1m15 0h1m15 0h1m15 0h1m15 0h1m15 0h1m15 0h1m15 0h1m15 0h1m15 0h1m14 0h1m15 0h1m15 0h1m15 0h1m15 0h1m15 0h1m15 0h1m15 0h1m15 0h1m15 0h1m15 0h1m15 0h1m15 0h1m15 0h1m15 0h1m15 0h1m15 0h1m15 0h1m15 0h1m15 0h1m15 0h1m15 0h1m15 0h1m15 0h1m15 0h1m14 0h1m15 0h1m15 0h1m15 0h1m15 0h1m15 0h1m15 0h1m15 0h1m15 0h1m15 0h1m15 0h1m15 0h1m15 0h1m15 0h1m15 0h1m15 0h1m15 0h1m15 0h1m15 0h1m15 0h1m15 0h1m15 0h1m15 0h1m15 0h1m15 0h1m14 0h1m15 0h1m15 0h1m15 0h1m15 0h1m15 0h1m15 0h1m15 0h1m15 0h1m15 0h1m15 0h1m15 0h1m15 0h1m15 0h1m15 0h1m15 0h1m15 0h1m15 0h1m15 0h1M70 589.5h1m15 0h1m15 0h1m15 0h1m15 0h1m15 0h1m15 0h1m15 0h1m15 0h1m15 0h1m15 0h1m15 0h1m15 0h1m15 0h1m15 0h1m15 0h1m15 0h1m15 0h1m15 0h1m15 0h1m15 0h1m15 0h1m14 0h1m15 0h1m15 0h1m15 0h1m15 0h1m15 0h1m15 0h1m15 0h1m15 0h1m15 0h1m15 0h1m15 0h1m15 0h1m15 0h1m15 0h1m15 0h1m15 0h1m15 0h1m15 0h1m15 0h1m15 0h1m15 0h1m15 0h1m15 0h1m15 0h1m14 0h1m15 0h1m15 0h1m15 0h1m15 0h1m15 0h1m15 0h1m15 0h1m15 0h1m15 0h1m15 0h1m15 0h1m15 0h1m15 0h1m15 0h1m15 0h1m15 0h1m15 0h1m15 0h1m15 0h1m15 0h1m15 0h1m15 0h1m15 0h1m15 0h1m14 0h1m15 0h1m15 0h1m15 0h1m15 0h1m15 0h1m15 0h1m15 0h1m15 0h1m15 0h1m15 0h1m15 0h1m15 0h1m15 0h1m15 0h1m15 0h1m15 0h1m15 0h1m15 0h1m15 0h1m15 0h1m15 0h1m15 0h1m15 0h1m15 0h1m14 0h1m15 0h1m15 0h1m15 0h1m15 0h1m15 0h1m15 0h1m15 0h1m15 0h1m15 0h1m15 0h1m15 0h1m15 0h1m15 0h1m15 0h1m15 0h1m15 0h1m15 0h1m15 0h1M70 605.5h1m15 0h1m15 0h1m15 0h1m15 0h1m15 0h1m15 0h1m15 0h1m15 0h1m15 0h1m15 0h1m15 0h1m15 0h1m15 0h1m15 0h1m15 0h1m15 0h1m15 0h1m15 0h1m15 0h1m15 0h1m15 0h1m14 0h1m15 0h1m15 0h1m15 0h1m15 0h1m15 0h1m15 0h1m15 0h1m15 0h1m15 0h1m15 0h1m15 0h1m15 0h1m15 0h1m15 0h1m15 0h1m15 0h1m15 0h1m15 0h1m15 0h1m15 0h1m15 0h1m15 0h1m15 0h1m15 0h1m14 0h1m15 0h1m15 0h1m15 0h1m15 0h1m15 0h1m15 0h1m15 0h1m15 0h1m15 0h1m15 0h1m15 0h1m15 0h1m15 0h1m15 0h1m15 0h1m15 0h1m15 0h1m15 0h1m15 0h1m15 0h1m15 0h1m15 0h1m15 0h1m15 0h1m14 0h1m15 0h1m15 0h1m15 0h1m15 0h1m15 0h1m15 0h1m15 0h1m15 0h1m15 0h1m15 0h1m15 0h1m15 0h1m15 0h1m15 0h1m15 0h1m15 0h1m15 0h1m15 0h1m15 0h1m15 0h1m15 0h1m15 0h1m15 0h1m15 0h1m14 0h1m15 0h1m15 0h1m15 0h1m15 0h1m15 0h1m15 0h1m15 0h1m15 0h1m15 0h1m15 0h1m15 0h1m15 0h1m15 0h1m15 0h1m15 0h1m15 0h1m15 0h1m15 0h1M70 621.5h1m15 0h1m15 0h1m15 0h1m15 0h1m15 0h1m15 0h1m15 0h1m15 0h1m15 0h1m15 0h1m15 0h1m15 0h1m15 0h1m15 0h1m15 0h1m15 0h1m15 0h1m15 0h1m15 0h1m15 0h1m15 0h1m14 0h1m15 0h1m15 0h1m15 0h1m15 0h1m15 0h1m15 0h1m15 0h1m15 0h1m15 0h1m15 0h1m15 0h1m15 0h1m15 0h1m15 0h1m15 0h1m15 0h1m15 0h1m15 0h1m15 0h1m15 0h1m15 0h1m15 0h1m15 0h1m15 0h1m14 0h1m15 0h1m15 0h1m15 0h1m15 0h1m15 0h1m15 0h1m15 0h1m15 0h1m15 0h1m15 0h1m15 0h1m15 0h1m15 0h1m15 0h1m15 0h1m15 0h1m15 0h1m15 0h1m15 0h1m15 0h1m15 0h1m15 0h1m15 0h1m15 0h1m14 0h1m15 0h1m15 0h1m15 0h1m15 0h1m15 0h1m15 0h1m15 0h1m15 0h1m15 0h1m15 0h1m15 0h1m15 0h1m15 0h1m15 0h1m15 0h1m15 0h1m15 0h1m15 0h1m15 0h1m15 0h1m15 0h1m15 0h1m15 0h1m15 0h1m14 0h1m15 0h1m15 0h1m15 0h1m15 0h1m15 0h1m15 0h1m15 0h1m15 0h1m15 0h1m15 0h1m15 0h1m15 0h1m15 0h1m15 0h1m15 0h1m15 0h1m15 0h1m15 0h1M70 637.5h1m15 0h1m15 0h1m15 0h1m15 0h1m15 0h1m15 0h1m15 0h1m15 0h1m15 0h1m15 0h1m15 0h1m15 0h1m15 0h1m15 0h1m15 0h1m15 0h1m15 0h1m15 0h1m15 0h1m15 0h1m15 0h1m14 0h1m15 0h1m15 0h1m15 0h1m15 0h1m15 0h1m15 0h1m15 0h1m15 0h1m15 0h1m15 0h1m15 0h1m15 0h1m15 0h1m15 0h1m15 0h1m15 0h1m15 0h1m15 0h1m15 0h1m15 0h1m15 0h1m15 0h1m15 0h1m15 0h1m14 0h1m15 0h1m15 0h1m15 0h1m15 0h1m15 0h1m15 0h1m15 0h1m15 0h1m15 0h1m15 0h1m15 0h1m15 0h1m15 0h1m15 0h1m15 0h1m15 0h1m15 0h1m15 0h1m15 0h1m15 0h1m15 0h1m15 0h1m15 0h1m15 0h1m14 0h1m15 0h1m15 0h1m15 0h1m15 0h1m15 0h1m15 0h1m15 0h1m15 0h1m15 0h1m15 0h1m15 0h1m15 0h1m15 0h1m15 0h1m15 0h1m15 0h1m15 0h1m15 0h1m15 0h1m15 0h1m15 0h1m15 0h1m15 0h1m15 0h1m14 0h1m15 0h1m15 0h1m15 0h1m15 0h1m15 0h1m15 0h1m15 0h1m15 0h1m15 0h1m15 0h1m15 0h1m15 0h1m15 0h1m15 0h1m15 0h1m15 0h1m15 0h1m15 0h1M70 653.5h1m15 0h1m15 0h1m15 0h1m15 0h1m15 0h1m15 0h1m15 0h1m15 0h1m15 0h1m15 0h1m15 0h1m15 0h1m15 0h1m15 0h1m15 0h1m15 0h1m15 0h1m15 0h1m15 0h1m15 0h1m15 0h1m14 0h1m15 0h1m15 0h1m15 0h1m15 0h1m15 0h1m15 0h1m15 0h1m15 0h1m15 0h1m15 0h1m15 0h1m15 0h1m15 0h1m15 0h1m15 0h1m15 0h1m15 0h1m15 0h1m15 0h1m15 0h1m15 0h1m15 0h1m15 0h1m15 0h1m14 0h1m15 0h1m15 0h1m15 0h1m15 0h1m15 0h1m15 0h1m15 0h1m15 0h1m15 0h1m15 0h1m15 0h1m15 0h1m15 0h1m15 0h1m15 0h1m15 0h1m15 0h1m15 0h1m15 0h1m15 0h1m15 0h1m15 0h1m15 0h1m15 0h1m14 0h1m15 0h1m15 0h1m15 0h1m15 0h1m15 0h1m15 0h1m15 0h1m15 0h1m15 0h1m15 0h1m15 0h1m15 0h1m15 0h1m15 0h1m15 0h1m15 0h1m15 0h1m15 0h1m15 0h1m15 0h1m15 0h1m15 0h1m15 0h1m15 0h1m14 0h1m15 0h1m15 0h1m15 0h1m15 0h1m15 0h1m15 0h1m15 0h1m15 0h1m15 0h1m15 0h1m15 0h1m15 0h1m15 0h1m15 0h1m15 0h1m15 0h1m15 0h1m15 0h1M70 669.5h1m15 0h1m15 0h1m15 0h1m15 0h1m15 0h1m15 0h1m15 0h1m15 0h1m15 0h1m15 0h1m15 0h1m15 0h1m15 0h1m15 0h1m15 0h1m15 0h1m15 0h1m15 0h1m15 0h1m15 0h1m15 0h1m14 0h1m15 0h1m15 0h1m15 0h1m15 0h1m15 0h1m15 0h1m15 0h1m15 0h1m15 0h1m15 0h1m15 0h1m15 0h1m15 0h1m15 0h1m15 0h1m15 0h1m15 0h1m15 0h1m15 0h1m15 0h1m15 0h1m15 0h1m15 0h1m15 0h1m14 0h1m15 0h1m15 0h1m15 0h1m15 0h1m15 0h1m15 0h1m15 0h1m15 0h1m15 0h1m15 0h1m15 0h1m15 0h1m15 0h1m15 0h1m15 0h1m15 0h1m15 0h1m15 0h1m15 0h1m15 0h1m15 0h1m15 0h1m15 0h1m15 0h1m14 0h1m15 0h1m15 0h1m15 0h1m15 0h1m15 0h1m15 0h1m15 0h1m15 0h1m15 0h1m15 0h1m15 0h1m15 0h1m15 0h1m15 0h1m15 0h1m15 0h1m15 0h1m15 0h1m15 0h1m15 0h1m15 0h1m15 0h1m15 0h1m15 0h1m14 0h1m15 0h1m15 0h1m15 0h1m15 0h1m15 0h1m15 0h1m15 0h1m15 0h1m15 0h1m15 0h1m15 0h1m15 0h1m15 0h1m15 0h1m15 0h1m15 0h1m15 0h1m15 0h1M70 685.5h1m15 0h1m15 0h1m15 0h1m15 0h1m15 0h1m15 0h1m15 0h1m15 0h1m15 0h1m15 0h1m15 0h1m15 0h1m15 0h1m15 0h1m15 0h1m15 0h1m15 0h1m15 0h1m15 0h1m15 0h1m15 0h1m14 0h1m15 0h1m15 0h1m15 0h1m15 0h1m15 0h1m15 0h1m15 0h1m15 0h1m15 0h1m15 0h1m15 0h1m15 0h1m15 0h1m15 0h1m15 0h1m15 0h1m15 0h1m15 0h1m15 0h1m15 0h1m15 0h1m15 0h1m15 0h1m15 0h1m14 0h1m15 0h1m15 0h1m15 0h1m15 0h1m15 0h1m15 0h1m15 0h1m15 0h1m15 0h1m15 0h1m15 0h1m15 0h1m15 0h1m15 0h1m15 0h1m15 0h1m15 0h1m15 0h1m15 0h1m15 0h1m15 0h1m15 0h1m15 0h1m15 0h1m14 0h1m15 0h1m15 0h1m15 0h1m15 0h1m15 0h1m15 0h1m15 0h1m15 0h1m15 0h1m15 0h1m15 0h1m15 0h1m15 0h1m15 0h1m15 0h1m15 0h1m15 0h1m15 0h1m15 0h1m15 0h1m15 0h1m15 0h1m15 0h1m15 0h1m14 0h1m15 0h1m15 0h1m15 0h1m15 0h1m15 0h1m15 0h1m15 0h1m15 0h1m15 0h1m15 0h1m15 0h1m15 0h1m15 0h1m15 0h1m15 0h1m15 0h1m15 0h1m15 0h1M70 701.5h1m15 0h1m15 0h1m15 0h1m15 0h1m15 0h1m15 0h1m15 0h1m15 0h1m15 0h1m15 0h1m15 0h1m15 0h1m15 0h1m15 0h1m15 0h1m15 0h1m15 0h1m15 0h1m15 0h1m15 0h1m15 0h1m14 0h1m15 0h1m15 0h1m15 0h1m15 0h1m15 0h1m15 0h1m15 0h1m15 0h1m15 0h1m15 0h1m15 0h1m15 0h1m15 0h1m15 0h1m15 0h1m15 0h1m15 0h1m15 0h1m15 0h1m15 0h1m15 0h1m15 0h1m15 0h1m15 0h1m14 0h1m15 0h1m15 0h1m15 0h1m15 0h1m15 0h1m15 0h1m15 0h1m15 0h1m15 0h1m15 0h1m15 0h1m15 0h1m15 0h1m15 0h1m15 0h1m15 0h1m15 0h1m15 0h1m15 0h1m15 0h1m15 0h1m15 0h1m15 0h1m15 0h1m14 0h1m15 0h1m15 0h1m15 0h1m15 0h1m15 0h1m15 0h1m15 0h1m15 0h1m15 0h1m15 0h1m15 0h1m15 0h1m15 0h1m15 0h1m15 0h1m15 0h1m15 0h1m15 0h1m15 0h1m15 0h1m15 0h1m15 0h1m15 0h1m15 0h1m14 0h1m15 0h1m15 0h1m15 0h1m15 0h1m15 0h1m15 0h1m15 0h1m15 0h1m15 0h1m15 0h1m15 0h1m15 0h1m15 0h1m15 0h1m15 0h1m15 0h1m15 0h1m15 0h1M70 716.5h1m15 0h1m15 0h1m15 0h1m15 0h1m15 0h1m15 0h1m15 0h1m15 0h1m15 0h1m15 0h1m15 0h1m15 0h1m15 0h1m15 0h1m15 0h1m15 0h1m15 0h1m15 0h1m15 0h1m15 0h1m15 0h1m14 0h1m15 0h1m15 0h1m15 0h1m15 0h1m15 0h1m15 0h1m15 0h1m15 0h1m15 0h1m15 0h1m15 0h1m15 0h1m15 0h1m15 0h1m15 0h1m15 0h1m15 0h1m15 0h1m15 0h1m15 0h1m15 0h1m15 0h1m15 0h1m15 0h1m14 0h1m15 0h1m15 0h1m15 0h1m15 0h1m15 0h1m15 0h1m15 0h1m15 0h1m15 0h1m15 0h1m15 0h1m15 0h1m15 0h1m15 0h1m15 0h1m15 0h1m15 0h1m15 0h1m15 0h1m15 0h1m15 0h1m15 0h1m15 0h1m15 0h1m14 0h1m15 0h1m15 0h1m15 0h1m15 0h1m15 0h1m15 0h1m15 0h1m15 0h1m15 0h1m15 0h1m15 0h1m15 0h1m15 0h1m15 0h1m15 0h1m15 0h1m15 0h1m15 0h1m15 0h1m15 0h1m15 0h1m15 0h1m15 0h1m15 0h1m14 0h1m15 0h1m15 0h1m15 0h1m15 0h1m15 0h1m15 0h1m15 0h1m15 0h1m15 0h1m15 0h1m15 0h1m15 0h1m15 0h1m15 0h1m15 0h1m15 0h1m15 0h1m15 0h1M70 732.5h1m15 0h1m15 0h1m15 0h1m15 0h1m15 0h1m15 0h1m15 0h1m15 0h1m15 0h1m15 0h1m15 0h1m15 0h1m15 0h1m15 0h1m15 0h1m15 0h1m15 0h1m15 0h1m15 0h1m15 0h1m15 0h1m14 0h1m15 0h1m15 0h1m15 0h1m15 0h1m15 0h1m15 0h1m15 0h1m15 0h1m15 0h1m15 0h1m15 0h1m15 0h1m15 0h1m15 0h1m15 0h1m15 0h1m15 0h1m15 0h1m15 0h1m15 0h1m15 0h1m15 0h1m15 0h1m15 0h1m14 0h1m15 0h1m15 0h1m15 0h1m15 0h1m15 0h1m15 0h1m15 0h1m15 0h1m15 0h1m15 0h1m15 0h1m15 0h1m15 0h1m15 0h1m15 0h1m15 0h1m15 0h1m15 0h1m15 0h1m15 0h1m15 0h1m15 0h1m15 0h1m15 0h1m14 0h1m15 0h1m15 0h1m15 0h1m15 0h1m15 0h1m15 0h1m15 0h1m15 0h1m15 0h1m15 0h1m15 0h1m15 0h1m15 0h1m15 0h1m15 0h1m15 0h1m15 0h1m15 0h1m15 0h1m15 0h1m15 0h1m15 0h1m15 0h1m15 0h1m14 0h1m15 0h1m15 0h1m15 0h1m15 0h1m15 0h1m15 0h1m15 0h1m15 0h1m15 0h1m15 0h1m15 0h1m15 0h1m15 0h1m15 0h1m15 0h1m15 0h1m15 0h1m15 0h1M70 748.5h1m15 0h1m15 0h1m15 0h1m15 0h1m15 0h1m15 0h1m15 0h1m15 0h1m15 0h1m15 0h1m15 0h1m15 0h1m15 0h1m15 0h1m15 0h1m15 0h1m15 0h1m15 0h1m15 0h1m15 0h1m15 0h1m14 0h1m15 0h1m15 0h1m15 0h1m15 0h1m15 0h1m15 0h1m15 0h1m15 0h1m15 0h1m15 0h1m15 0h1m15 0h1m15 0h1m15 0h1m15 0h1m15 0h1m15 0h1m15 0h1m15 0h1m15 0h1m15 0h1m15 0h1m15 0h1m15 0h1m14 0h1m15 0h1m15 0h1m15 0h1m15 0h1m15 0h1m15 0h1m15 0h1m15 0h1m15 0h1m15 0h1m15 0h1m15 0h1m15 0h1m15 0h1m15 0h1m15 0h1m15 0h1m15 0h1m15 0h1m15 0h1m15 0h1m15 0h1m15 0h1m15 0h1m14 0h1m15 0h1m15 0h1m15 0h1m15 0h1m15 0h1m15 0h1m15 0h1m15 0h1m15 0h1m15 0h1m15 0h1m15 0h1m15 0h1m15 0h1m15 0h1m15 0h1m15 0h1m15 0h1m15 0h1m15 0h1m15 0h1m15 0h1m15 0h1m15 0h1m14 0h1m15 0h1m15 0h1m15 0h1m15 0h1m15 0h1m15 0h1m15 0h1m15 0h1m15 0h1m15 0h1m15 0h1m15 0h1m15 0h1m15 0h1m15 0h1m15 0h1m15 0h1m15 0h1M70 764.5h1m15 0h1m15 0h1m15 0h1m15 0h1m15 0h1m15 0h1m15 0h1m15 0h1m15 0h1m15 0h1m15 0h1m15 0h1m15 0h1m15 0h1m15 0h1m15 0h1m15 0h1m15 0h1m15 0h1m15 0h1m15 0h1m14 0h1m15 0h1m15 0h1m15 0h1m15 0h1m15 0h1m15 0h1m15 0h1m15 0h1m15 0h1m15 0h1m15 0h1m15 0h1m15 0h1m15 0h1m15 0h1m15 0h1m15 0h1m15 0h1m15 0h1m15 0h1m15 0h1m15 0h1m15 0h1m15 0h1m14 0h1m15 0h1m15 0h1m15 0h1m15 0h1m15 0h1m15 0h1m15 0h1m15 0h1m15 0h1m15 0h1m15 0h1m15 0h1m15 0h1m15 0h1m15 0h1m15 0h1m15 0h1m15 0h1m15 0h1m15 0h1m15 0h1m15 0h1m15 0h1m15 0h1m14 0h1m15 0h1m15 0h1m15 0h1m15 0h1m15 0h1m15 0h1m15 0h1m15 0h1m15 0h1m15 0h1m15 0h1m15 0h1m15 0h1m15 0h1m15 0h1m15 0h1m15 0h1m15 0h1m15 0h1m15 0h1m15 0h1m15 0h1m15 0h1m15 0h1m14 0h1m15 0h1m15 0h1m15 0h1m15 0h1m15 0h1m15 0h1m15 0h1m15 0h1m15 0h1m15 0h1m15 0h1m15 0h1m15 0h1m15 0h1m15 0h1m15 0h1m15 0h1m15 0h1M70 780.5h1m15 0h1m15 0h1m15 0h1m15 0h1m15 0h1m15 0h1m15 0h1m15 0h1m15 0h1m15 0h1m15 0h1m15 0h1m15 0h1m15 0h1m15 0h1m15 0h1m15 0h1m15 0h1m15 0h1m15 0h1m15 0h1m14 0h1m15 0h1m15 0h1m15 0h1m15 0h1m15 0h1m15 0h1m15 0h1m15 0h1m15 0h1m15 0h1m15 0h1m15 0h1m15 0h1m15 0h1m15 0h1m15 0h1m15 0h1m15 0h1m15 0h1m15 0h1m15 0h1m15 0h1m15 0h1m15 0h1m14 0h1m15 0h1m15 0h1m15 0h1m15 0h1m15 0h1m15 0h1m15 0h1m15 0h1m15 0h1m15 0h1m15 0h1m15 0h1m15 0h1m15 0h1m15 0h1m15 0h1m15 0h1m15 0h1m15 0h1m15 0h1m15 0h1m15 0h1m15 0h1m15 0h1m14 0h1m15 0h1m15 0h1m15 0h1m15 0h1m15 0h1m15 0h1m15 0h1m15 0h1m15 0h1m15 0h1m15 0h1m15 0h1m15 0h1m15 0h1m15 0h1m15 0h1m15 0h1m15 0h1m15 0h1m15 0h1m15 0h1m15 0h1m15 0h1m15 0h1m14 0h1m15 0h1m15 0h1m15 0h1m15 0h1m15 0h1m15 0h1m15 0h1m15 0h1m15 0h1m15 0h1m15 0h1m15 0h1m15 0h1m15 0h1m15 0h1m15 0h1m15 0h1m15 0h1M70 796.5h1m15 0h1m15 0h1m15 0h1m15 0h1m15 0h1m15 0h1m15 0h1m15 0h1m15 0h1m15 0h1m15 0h1m15 0h1m15 0h1m15 0h1m15 0h1m15 0h1m15 0h1m15 0h1m15 0h1m15 0h1m15 0h1m14 0h1m15 0h1m15 0h1m15 0h1m15 0h1m15 0h1m15 0h1m15 0h1m15 0h1m15 0h1m15 0h1m15 0h1m15 0h1m15 0h1m15 0h1m15 0h1m15 0h1m15 0h1m15 0h1m15 0h1m15 0h1m15 0h1m15 0h1m15 0h1m15 0h1m14 0h1m15 0h1m15 0h1m15 0h1m15 0h1m15 0h1m15 0h1m15 0h1m15 0h1m15 0h1m15 0h1m15 0h1m15 0h1m15 0h1m15 0h1m15 0h1m15 0h1m15 0h1m15 0h1m15 0h1m15 0h1m15 0h1m15 0h1m15 0h1m15 0h1m14 0h1m15 0h1m15 0h1m15 0h1m15 0h1m15 0h1m15 0h1m15 0h1m15 0h1m15 0h1m15 0h1m15 0h1m15 0h1m15 0h1m15 0h1m15 0h1m15 0h1m15 0h1m15 0h1m15 0h1m15 0h1m15 0h1m15 0h1m15 0h1m15 0h1m14 0h1m15 0h1m15 0h1m15 0h1m15 0h1m15 0h1m15 0h1m15 0h1m15 0h1m15 0h1m15 0h1m15 0h1m15 0h1m15 0h1m15 0h1m15 0h1m15 0h1m15 0h1m15 0h1M70 812.5h1m15 0h1m15 0h1m15 0h1m15 0h1m15 0h1m15 0h1m15 0h1m15 0h1m15 0h1m15 0h1m15 0h1m15 0h1m15 0h1m15 0h1m15 0h1m15 0h1m15 0h1m15 0h1m15 0h1m15 0h1m15 0h1m14 0h1m15 0h1m15 0h1m15 0h1m15 0h1m15 0h1m15 0h1m15 0h1m15 0h1m15 0h1m15 0h1m15 0h1m15 0h1m15 0h1m15 0h1m15 0h1m15 0h1m15 0h1m15 0h1m15 0h1m15 0h1m15 0h1m15 0h1m15 0h1m15 0h1m14 0h1m15 0h1m15 0h1m15 0h1m15 0h1m15 0h1m15 0h1m15 0h1m15 0h1m15 0h1m15 0h1m15 0h1m15 0h1m15 0h1m15 0h1m15 0h1m15 0h1m15 0h1m15 0h1m15 0h1m15 0h1m15 0h1m15 0h1m15 0h1m15 0h1m14 0h1m15 0h1m15 0h1m15 0h1m15 0h1m15 0h1m15 0h1m15 0h1m15 0h1m15 0h1m15 0h1m15 0h1m15 0h1m15 0h1m15 0h1m15 0h1m15 0h1m15 0h1m15 0h1m15 0h1m15 0h1m15 0h1m15 0h1m15 0h1m15 0h1m14 0h1m15 0h1m15 0h1m15 0h1m15 0h1m15 0h1m15 0h1m15 0h1m15 0h1m15 0h1m15 0h1m15 0h1m15 0h1m15 0h1m15 0h1m15 0h1m15 0h1m15 0h1m15 0h1M70 828.5h1m15 0h1m15 0h1m15 0h1m15 0h1m15 0h1m15 0h1m15 0h1m15 0h1m15 0h1m15 0h1m15 0h1m15 0h1m15 0h1m15 0h1m15 0h1m15 0h1m15 0h1m15 0h1m15 0h1m15 0h1m15 0h1m14 0h1m15 0h1m15 0h1m15 0h1m15 0h1m15 0h1m15 0h1m15 0h1m15 0h1m15 0h1m15 0h1m15 0h1m15 0h1m15 0h1m15 0h1m15 0h1m15 0h1m15 0h1m15 0h1m15 0h1m15 0h1m15 0h1m15 0h1m15 0h1m15 0h1m14 0h1m15 0h1m15 0h1m15 0h1m15 0h1m15 0h1m15 0h1m15 0h1m15 0h1m15 0h1m15 0h1m15 0h1m15 0h1m15 0h1m15 0h1m15 0h1m15 0h1m15 0h1m15 0h1m15 0h1m15 0h1m15 0h1m15 0h1m15 0h1m15 0h1m14 0h1m15 0h1m15 0h1m15 0h1m15 0h1m15 0h1m15 0h1m15 0h1m15 0h1m15 0h1m15 0h1m15 0h1m15 0h1m15 0h1m15 0h1m15 0h1m15 0h1m15 0h1m15 0h1m15 0h1m15 0h1m15 0h1m15 0h1m15 0h1m15 0h1m14 0h1m15 0h1m15 0h1m15 0h1m15 0h1m15 0h1m15 0h1m15 0h1m15 0h1m15 0h1m15 0h1m15 0h1m15 0h1m15 0h1m15 0h1m15 0h1m15 0h1m15 0h1m15 0h1M70 844.5h1m15 0h1m15 0h1m15 0h1m15 0h1m15 0h1m15 0h1m15 0h1m15 0h1m15 0h1m15 0h1m15 0h1m15 0h1m15 0h1m15 0h1m15 0h1m15 0h1m15 0h1m15 0h1m15 0h1m15 0h1m15 0h1m14 0h1m15 0h1m15 0h1m15 0h1m15 0h1m15 0h1m15 0h1m15 0h1m15 0h1m15 0h1m15 0h1m15 0h1m15 0h1m15 0h1m15 0h1m15 0h1m15 0h1m15 0h1m15 0h1m15 0h1m15 0h1m15 0h1m15 0h1m15 0h1m15 0h1m14 0h1m15 0h1m15 0h1m15 0h1m15 0h1m15 0h1m15 0h1m15 0h1m15 0h1m15 0h1m15 0h1m15 0h1m15 0h1m15 0h1m15 0h1m15 0h1m15 0h1m15 0h1m15 0h1m15 0h1m15 0h1m15 0h1m15 0h1m15 0h1m15 0h1m14 0h1m15 0h1m15 0h1m15 0h1m15 0h1m15 0h1m15 0h1m15 0h1m15 0h1m15 0h1m15 0h1m15 0h1m15 0h1m15 0h1m15 0h1m15 0h1m15 0h1m15 0h1m15 0h1m15 0h1m15 0h1m15 0h1m15 0h1m15 0h1m15 0h1m14 0h1m15 0h1m15 0h1m15 0h1m15 0h1m15 0h1m15 0h1m15 0h1m15 0h1m15 0h1m15 0h1m15 0h1m15 0h1m15 0h1m15 0h1m15 0h1m15 0h1m15 0h1m15 0h1M70 860.5h1m15 0h1m15 0h1m15 0h1m15 0h1m15 0h1m15 0h1m15 0h1m15 0h1m15 0h1m15 0h1m15 0h1m15 0h1m15 0h1m15 0h1m15 0h1m15 0h1m15 0h1m15 0h1m15 0h1m15 0h1m15 0h1m14 0h1m15 0h1m15 0h1m15 0h1m15 0h1m15 0h1m15 0h1m15 0h1m15 0h1m15 0h1m15 0h1m15 0h1m15 0h1m15 0h1m15 0h1m15 0h1m15 0h1m15 0h1m15 0h1m15 0h1m15 0h1m15 0h1m15 0h1m15 0h1m15 0h1m14 0h1m15 0h1m15 0h1m15 0h1m15 0h1m15 0h1m15 0h1m15 0h1m15 0h1m15 0h1m15 0h1m15 0h1m15 0h1m15 0h1m15 0h1m15 0h1m15 0h1m15 0h1m15 0h1m15 0h1m15 0h1m15 0h1m15 0h1m15 0h1m15 0h1m14 0h1m15 0h1m15 0h1m15 0h1m15 0h1m15 0h1m15 0h1m15 0h1m15 0h1m15 0h1m15 0h1m15 0h1m15 0h1m15 0h1m15 0h1m15 0h1m15 0h1m15 0h1m15 0h1m15 0h1m15 0h1m15 0h1m15 0h1m15 0h1m15 0h1m14 0h1m15 0h1m15 0h1m15 0h1m15 0h1m15 0h1m15 0h1m15 0h1m15 0h1m15 0h1m15 0h1m15 0h1m15 0h1m15 0h1m15 0h1m15 0h1m15 0h1m15 0h1m15 0h1" stroke="#8d93a1" stroke-width="1" fill="none" shape-rendering="crispEdges"/></svg>
<div class="a" style="left:223px;top:135px;width:1533px;height:623px;border-radius:4px;border:1px solid #25507f;background:linear-gradient(to bottom,#1f3852 0,#1f3852 596px,#213f5e 100%)"></div>
<div class="a" style="left:0;top:0;width:70px;height:897px;background:#414244;border-right:1px solid #58595c"></div>
<div class="a" style="left:70px;top:0;width:1837px;height:82px;background:#414244;border-bottom:1px solid #58595c"></div>
<div class="a" style="left:0;top:0;width:1907px;height:1px;background:#5b5c5f"></div>
<div class="a" style="left:1705px;top:1px;width:1px;height:80px;background:#58595c"></div>
<div class="a" style="left:70px;top:864px;width:1837px;height:33px;background:#2d2e2e;border-top:1px solid #58595c"></div>
<div class="t" style="left:90.40px;top:875.90px;font-size:15.6px;letter-spacing:-0.243px;color:#ffffff;">Logs</div>
<svg width="38" height="20" viewBox="0 0 38 20" style="left:8px;top:28px" fill="none" stroke="#ff6d5a" stroke-width="1.7">
<circle cx="4.2" cy="10.5" r="2.6"/><circle cx="14.6" cy="10.5" r="2.6"/><circle cx="34.6" cy="4.6" r="2.6"/><circle cx="30.4" cy="16" r="2.6"/>
<path d="M6.8 10.5h5.2M17.2 10.5h3.2M32 4.6h-4.2c-2.2 0-3.3 1.3-3.7 3.1c-.4 1.7-1.5 2.8-3.9 2.8c2.400 0 3.500 1.100 3.900 2.800c.4 1.800 1.500 2.700 3.500 2.700"/></svg>
<div class="a" style="left:10.5px;top:69px;width:37.5px;height:37px;border-radius:5px;border:1px solid #595a5d"></div>
<svg class="ic" viewBox="0 0 24 24" width="16" height="16" style="left:21.20px;top:79.60px;stroke:#fff;stroke-width:1.9"><path d="M5 12h14M12 5v14"/></svg>
<svg class="ic" viewBox="0 0 24 24" width="21.3" height="21.3" style="left:18.35px;top:134.85px;"><path d="M15 21v-8a1 1 0 0 0-1-1h-4a1 1 0 0 0-1 1v8"/><path d="M3 10a2 2 0 0 1 .709-1.528l7-5.999a2 2 0 0 1 2.582 0l7 5.999A2 2 0 0 1 21 10v9a2 2 0 0 1-2 2H5a2 2 0 0 1-2-2z"/></svg>
<div class="a" style="left:4px;top:181px;width:50px;height:50px;border-radius:4px;background:#535456"></div>
<svg class="ic" viewBox="0 0 24 24" width="21.3" height="21.3" style="left:18.35px;top:195.35px;stroke:#fff"><path d="M19 21v-2a4 4 0 0 0-4-4H9a4 4 0 0 0-4 4v2"/><circle cx="12" cy="7" r="4"/></svg>
<div class="a" style="left:14.5px;top:325.5px;width:34px;height:34px;border-radius:5px;background:#2d2e2e;border:1px solid #4e4f52"></div>
<svg class="ic" viewBox="0 0 24 24" width="15" height="15" style="left:24.10px;top:335.10px;stroke:#fff;stroke-width:2"><path d="M5 12h14M12 5v14"/></svg>
<div class="a" style="left:57.5px;top:453px;width:24px;height:24px;border-radius:50%;background:#2d2e2e;border:1px solid #5d5e61"></div>
<svg class="ic" viewBox="0 0 24 24" width="11" height="11" style="left:64.30px;top:459.70px;stroke:#9da1ab;stroke-width:2.4"><path d="M9 5l7 7-7 7"/></svg>
<div class="a" style="left:-30px;top:458.5px;width:61.5px;height:45px;border-radius:22.5px;background:#2d2e2e;box-shadow:0 0 8px 2px rgba(45,46,46,.55)"></div>
<svg width="32" height="46" viewBox="0 0 32 46" style="left:0;top:458px" fill="#fff">
<path d="M6.300 11.500 C7.500 18.500 9.500 21 14.800 22.800 C9.500 24.600 7.500 27 6.300 34.200 C5.100 27 3.100 24.600 -2.200 22.800 C3.100 21 5.100 18.500 6.300 11.500Z"/>
<path d="M16.600 9.600 C17.200 12.900 18 13.900 20.800 14.800 C18 15.700 17.200 16.700 16.600 20 C16 16.700 15.200 15.700 12.400 14.800 C15.200 13.900 16 12.900 16.600 9.600Z"/>
<path d="M16.600 25.300 C17.200 28.600 18 29.600 20.800 30.500 C18 31.400 17.200 32.400 16.600 35.700 C16 32.400 15.200 31.400 12.400 30.500 C15.200 29.600 16 28.600 16.600 25.300Z"/></svg>
<svg class="ic" viewBox="0 0 24 24" width="21.3" height="21.3" style="left:18.35px;top:518.35px;"><path d="M17.5 19H9a7 7 0 1 1 6.71-9h1.79a4.5 4.5 0 1 1 0 9Z"/></svg>
<svg class="ic" viewBox="0 0 24 24" width="21.3" height="21.3" style="left:18.35px;top:571.85px;"><path d="M12 22v-9"/><path d="M15.17 2.21a1.67 1.67 0 0 1 1.63 0L21 4.57a1.93 1.93 0 0 1 0 3.36L8.82 14.79a1.655 1.655 0 0 1-1.64 0L3 12.43a1.93 1.93 0 0 1 0-3.36z"/><path d="M20 13v3.87a2.06 2.06 0 0 1-1.11 1.83l-6 3.08a1.93 1.93 0 0 1-1.78 0l-6-3.08A2.06 2.06 0 0 1 4 16.87V13"/><path d="M21 12.43a1.93 1.93 0 0 0 0-3.36L8.83 2.2a1.64 1.64 0 0 0-1.63 0L3 4.57a1.93 1.93 0 0 0 0 3.36l12.18 6.86a1.636 1.636 0 0 0 1.63 0z"/></svg>
<svg class="ic" viewBox="0 0 24 24" width="21.3" height="21.3" style="left:18.35px;top:626.35px;"><path d="M8 21s-4-3-4-9 4-9 4-9"/><path d="M16 3s4 3 4 9-4 9-4 9"/><path d="M15 9l-6 6M9 9l6 6"/></svg>
<svg class="ic" viewBox="0 0 24 24" width="21.3" height="21.3" style="left:18.35px;top:680.35px;"><path d="M3 3v16a2 2 0 0 0 2 2h16"/><path d="M8 17V5"/><path d="M13 17V9"/><path d="M18 17v-3"/></svg>
<svg class="ic" viewBox="0 0 24 24" width="21.3" height="21.3" style="left:18.35px;top:733.35px;"><circle cx="12" cy="12" r="10"/><path d="M9.09 9a3 3 0 0 1 5.83 1c0 2-3 3-3 3"/><path d="M12 17h.01"/></svg>
<svg class="ic" viewBox="0 0 24 24" width="21.3" height="21.3" style="left:18.35px;top:787.35px;"><path d="M10.268 21a2 2 0 0 0 3.464 0"/><path d="M3.262 15.326A1 1 0 0 0 4 17h16a1 1 0 0 0 .74-1.673C19.41 13.956 18 12.499 18 8A6 6 0 0 0 6 8c0 4.499-1.411 5.956-2.738 7.326"/></svg>
<div class="a" style="left:37.8px;top:786px;width:6.4px;height:6.4px;border-radius:50%;background:#ff6d5a"></div>
<div class="a" style="left:0;top:830px;width:69px;height:1px;background:#58595c"></div>
<div class="a" style="left:12px;top:849px;width:34.5px;height:34.5px;border-radius:50%;overflow:hidden;background:linear-gradient(to bottom,#ee6a5b 0,#ea786c 35%,#e58f88 56%,#6f52b8 61%,#6a4fb5 100%)"><div class="a" style="left:14px;top:1px;width:22px;height:17px;border-radius:50%;background:rgba(235,225,232,.6);filter:blur(2.500px)"></div></div>
<div class="t" style="left:16.30px;top:857.40px;font-size:17px;letter-spacing:-0.139px;color:#ffffff;font-weight:700;">AM</div>
<svg class="ic" viewBox="0 0 24 24" width="14.2" height="14.2" style="left:101.40px;top:35.20px;stroke:#c9cdd9;stroke-width:1.9"><path d="M19 21v-2a4 4 0 0 0-4-4H9a4 4 0 0 0-4 4v2"/><circle cx="12" cy="7" r="4"/></svg>
<div class="t" style="left:122.70px;top:33.00px;font-size:18.2px;letter-spacing:0.238px;color:#c9cdd9;">Personal</div>
<svg width="10" height="24" style="left:208px;top:31px"><path d="M8.200 1L1.500 22.500" stroke="#5c5d61" stroke-width="1.2" fill="none"/></svg>
<div class="t" style="left:228.60px;top:33.00px;font-size:18.2px;letter-spacing:0.829px;color:#ffffff;">My workflow</div>
<div class="t" style="left:365.30px;top:33.40px;font-size:15.0px;letter-spacing:0.013px;color:#a9adb9;font-weight:700;">+ Add tag</div>
<div class="a" style="left:1174.700px;top:26.700px;width:41.600px;height:28.300px;border-radius:4px;background:#505154"></div>
<div class="t" style="left:1180.40px;top:32.10px;font-size:15.2px;letter-spacing:0.256px;color:#e6e8ee;">0 / 3</div>
<div class="t" style="left:1242.50px;top:33.10px;font-size:15.8px;letter-spacing:0.575px;color:#35b85e;">Active</div>
<div class="a" style="left:1298.800px;top:29.200px;width:50.400px;height:24.600px;border-radius:12.300px;background:#1fc565"></div>
<div class="a" style="left:1326.900px;top:30.800px;width:20.400px;height:20.400px;border-radius:50%;background:#eff0f8"></div>
<div class="a" style="left:1399.800px;top:23.500px;width:73.600px;height:36px;border-radius:5px;background:#2d2e2e;border:1px solid #4e4f52"></div>
<div class="t" style="left:1415.80px;top:32.70px;font-size:15.2px;letter-spacing:-0.187px;color:#ffffff;font-weight:700;">Share</div>
<div class="t" style="left:1509.10px;top:33.00px;font-size:15.2px;letter-spacing:0.179px;color:#a5a9b5;font-weight:700;">Saved</div>
<svg class="ic" viewBox="0 0 24 24" width="19" height="19" style="left:1589.10px;top:32.00px;stroke:#e3e5ec;stroke-width:2"><path d="M3 12a9 9 0 1 0 9-9 9.750 9.750 0 0 0-6.740 2.740L3 8"/><path d="M3 3v5h5"/><path d="M12 7v5l4 2"/></svg>
<svg width="16" height="4" style="left:1654.500px;top:40px" fill="#a5a9b5"><circle cx="1.700" cy="2" r="1.500"/><circle cx="7.200" cy="2" r="1.500"/><circle cx="12.700" cy="2" r="1.500"/></svg>
<div class="a" style="left:1732.300px;top:24px;width:151px;height:32px;border-radius:4px;background:#0d1017;overflow:hidden"><div class="a" style="left:0;top:0;width:76.300px;height:32px;background:#20242c;border-right:1px solid #2b3340"></div></div>
<svg viewBox="0 0 16 16" width="20.400" height="20.400" style="left:1744.700px;top:29.700px" fill="#fff"><path d="M8 0C3.580 0 0 3.580 0 8c0 3.540 2.290 6.530 5.470 7.590.4.070.55-.17.55-.38 0-.19-.01-.82-.01-1.490-2.010.37-2.530-.49-2.690-.94-.09-.23-.48-.94-.82-1.130-.28-.15-.68-.52-.01-.53.63-.01 1.080.58 1.230.82.72 1.210 1.870.87 2.330.66.070-.52.28-.87.51-1.070-1.780-.2-3.640-.89-3.640-3.950 0-.87.310-1.590.82-2.150-.08-.2-.36-1.020.08-2.120 0 0 .67-.21 2.200.82.640-.18 1.320-.27 2-.27s1.360.09 2 .27c1.530-1.040 2.200-.82 2.200-.82.440 1.100.16 1.920.08 2.120.51.560.82 1.270.82 2.150 0 3.070-1.870 3.750-3.650 3.950.29.250.54.730.54 1.480 0 1.070-.01 1.930-.01 2.200 0 .21.150.46.550.38A8.010 8.010 0 0 0 16 8c0-4.420-3.580-8-8-8z"/></svg>
<div class="t" style="left:1769.50px;top:32.90px;font-size:14.8px;letter-spacing:-0.864px;color:#ffffff;font-weight:700;">Star</div>
<div class="t" style="left:1822.60px;top:32.90px;font-size:14.8px;letter-spacing:-0.900px;color:#ffffff;font-weight:700;">143,261</div>
<div class="a" style="left:837.500px;top:61px;width:305px;height:42.200px;border-radius:5px;background:#535456"></div>
<div class="a" style="left:842.600px;top:66px;width:72px;height:32.200px;border-radius:4px;background:#2d2e2e"></div>
<div class="t" style="left:857.10px;top:74.80px;font-size:14.9px;letter-spacing:-0.448px;color:#ffffff;font-weight:700;">Editor</div>
<div class="t" style="left:929.30px;top:73.80px;font-size:15.2px;letter-spacing:0.438px;color:#c5c9d6;-webkit-text-stroke:0.3px #c5c9d6;">Executions</div>
<div class="t" style="left:1038.40px;top:73.80px;font-size:15.2px;letter-spacing:0.471px;color:#c5c9d6;-webkit-text-stroke:0.3px #c5c9d6;">Evaluations</div>
<div class="sq" style="left:1837.400px;top:102.2px;width:51.400px;height:52px"></div>
<div class="sq" style="left:1837.400px;top:164.8px;width:51.400px;height:52px"></div>
<div class="sq" style="left:1837.400px;top:227.5px;width:51.400px;height:52px"></div>
<div class="sq" style="left:1837.400px;top:290.1px;width:51.400px;height:52px"></div>
<svg class="ic" viewBox="0 0 24 24" width="21.3" height="21.3" style="left:1852.45px;top:117.85px;stroke:#fff;stroke-width:1.7"><path d="M5 12h14M12 5v14"/></svg>
<svg class="ic" viewBox="0 0 24 24" width="21.3" height="21.3" style="left:1852.45px;top:180.55px;stroke:#fff;stroke-width:1.8"><path d="M16 3H5a2 2 0 0 0-2 2v14a2 2 0 0 0 2 2h14a2 2 0 0 0 2-2V8Z"/><path d="M15 3v4a2 2 0 0 0 2 2h4"/></svg>
<svg class="ic" viewBox="0 0 24 24" width="21.3" height="21.3" style="left:1852.45px;top:243.15px;stroke:#fff;stroke-width:1.8"><rect x="3" y="3" width="18" height="18" rx="2"/><path d="M15 3v18"/></svg>
<svg width="26" height="26" viewBox="0 0 26 26" style="left:1850px;top:303.500px"><defs><linearGradient id="sg" x1="0" y1="0" x2="1" y2="1"><stop offset="0" stop-color="#5b60e8"/><stop offset=".5" stop-color="#aa7bec"/><stop offset="1" stop-color="#ec7b8e"/></linearGradient></defs>
<path fill="url(#sg)" d="M11 5.500 C12.100 11.800 13.700 13.500 20 14.600 C13.700 15.700 12.100 17.400 11 23.700 C9.900 17.400 8.300 15.700 2 14.600 C8.300 13.500 9.900 11.800 11 5.500Z"/>
<path d="M17.700 1.800v5.200M15.100 4.400h5.200" stroke="#7f73e6" stroke-width="1.300" fill="none"/><path d="M22.400 7.200v3.800M20.500 9.100h3.800" stroke="#e87f95" stroke-width="1.200" fill="none"/></svg>
<div class="a" style="left:1677px;top:99px;width:78px;height:22px;background:#2d2e2e"></div>
<svg width="12" height="13" viewBox="0 0 12 13" style="left:1684.800px;top:103.200px" fill="#a5a9b5"><rect x="3" y="0.400" width="5.200" height="1.600" rx=".8"/><rect x=".3" y="2.400" width="10.600" height="1.400" rx=".4"/><path d="M1.100 4h9l-.6 7.200a1.200 1.200 0 0 1-1.200 1.100H2.900a1.200 1.200 0 0 1-1.200-1.100Z"/></svg>
<svg class="ic" viewBox="0 0 24 24" width="13.6" height="13.6" style="left:1710.30px;top:102.40px;stroke:#a5a9b5;stroke-width:2"><path d="M12 22a1 1 0 0 1 0-20 10 9 0 0 1 10 9 5 5 0 0 1-5 5h-2.250a1.750 1.750 0 0 0-1.400 2.800l.3.400a1.750 1.750 0 0 1-1.400 2.800z"/><circle cx="13.500" cy="6.500" r="1" fill="#a5a9b5"/><circle cx="17.500" cy="10.500" r="1" fill="#a5a9b5"/><circle cx="6.500" cy="12.500" r="1" fill="#a5a9b5"/><circle cx="8.500" cy="7.500" r="1" fill="#a5a9b5"/></svg>
<svg width="12" height="4" style="left:1736.800px;top:107.700px" fill="#a5a9b5"><circle cx="1.600" cy="1.700" r="1.250"/><circle cx="5.450" cy="1.700" r="1.250"/><circle cx="9.300" cy="1.700" r="1.250"/></svg>
<div class="sq" style="left:90.1px;top:791.500px;width:52.400px;height:52.400px"></div>
<div class="sq" style="left:158.1px;top:791.500px;width:52.400px;height:52.400px"></div>
<div class="sq" style="left:225.4px;top:791.500px;width:52.400px;height:52.400px"></div>
<div class="sq" style="left:292.8px;top:791.500px;width:52.400px;height:52.400px"></div>
<div class="sq" style="left:360.2px;top:791.500px;width:52.400px;height:52.400px"></div>
<svg class="ic" viewBox="0 0 24 24" width="21.3" height="21.3" style="left:106.05px;top:807.35px;stroke:#e3e5ec;stroke-width:1.9"><path d="M8 3H5a2 2 0 0 0-2 2v3"/><path d="M21 8V5a2 2 0 0 0-2-2h-3"/><path d="M3 16v3a2 2 0 0 0 2 2h3"/><path d="M16 21h3a2 2 0 0 0 2-2v-3"/></svg>
<svg class="ic" viewBox="0 0 24 24" width="21.3" height="21.3" style="left:173.65px;top:807.35px;stroke:#e3e5ec;stroke-width:1.9"><circle cx="11" cy="11" r="8"/><path d="M21 21l-4.350-4.350M11 8v6M8 11h6"/></svg>
<svg class="ic" viewBox="0 0 24 24" width="21.3" height="21.3" style="left:240.95px;top:807.35px;stroke:#e3e5ec;stroke-width:1.9"><circle cx="11" cy="11" r="8"/><path d="M21 21l-4.350-4.350M8 11h6"/></svg>
<svg class="ic" viewBox="0 0 24 24" width="21.3" height="21.3" style="left:308.35px;top:807.35px;stroke:#e3e5ec;stroke-width:1.9"><path d="M9 14L4 9l5-5"/><path d="M4 9h10.500a5.500 5.500 0 0 1 5.500 5.500a5.500 5.500 0 0 1-5.500 5.500H11"/></svg>
<svg width="24" height="24" viewBox="0 0 24 24" style="left:374.500px;top:805.500px" fill="#e3e5ec"><g transform="rotate(-38 12 12)"><rect x="10.900" y="0.500" width="2.400" height="9" rx="1"/><path d="M6.500 9.500h11v3h-11z"/><path d="M7 13.300h10l1.600 8.200h-3l-.8-3-.7 3h-8.700z"/></g></svg>
<svg class="ic" viewBox="0 0 24 24" width="18.6" height="18.6" style="left:1841.30px;top:875.30px;stroke-width:2"><rect x="2.500" y="6" width="15.500" height="15.500" rx="3.500" fill="#b4b8c5" stroke="none"/><rect x="6.500" y="2" width="15.500" height="15.500" rx="3.500" fill="#b4b8c5" stroke="#2d2e2e" stroke-width="1.300"/><path d="M10.800 13.300l6.400-6.400M12.300 6.600h5.100v5.100" stroke="#2d2e2e" stroke-width="1.900"/></svg>
<svg class="ic" viewBox="0 0 24 24" width="14" height="14" style="left:1876.20px;top:877.80px;stroke:#b4b8c3;stroke-width:2.300"><path d="M5 15l7-7 7 7"/></svg>
<svg width="1907" height="897" style="left:0;top:0"><path d="M709.0 230.9H835.9" stroke="#c1c6d3" stroke-width="2" fill="none"/><path d="M833.8 224.3L841.4 230.9L833.8 237.5Z" fill="#c1c6d3" stroke="#c1c6d3" stroke-width="1.2" stroke-linejoin="round"/><path d="M948.7 230.9H1043.3" stroke="#c1c6d3" stroke-width="2" fill="none"/><path d="M1041.2 224.3L1048.8 230.9L1041.2 237.5Z" fill="#c1c6d3" stroke="#c1c6d3" stroke-width="1.2" stroke-linejoin="round"/><path d="M1156.1 230.9H1250.3" stroke="#c1c6d3" stroke-width="2" fill="none"/><path d="M1248.2 224.3L1255.8 230.9L1248.2 237.5Z" fill="#c1c6d3" stroke="#c1c6d3" stroke-width="1.2" stroke-linejoin="round"/><path d="M1363.1 230.9H1474.2" stroke="#c1c6d3" stroke-width="2" fill="none"/><path d="M1472.1 224.3L1479.7 230.9L1472.1 237.5Z" fill="#c1c6d3" stroke="#c1c6d3" stroke-width="1.2" stroke-linejoin="round"/><path d="M1587.0 230.9H1636.0" stroke="#c1c6d3" stroke-width="2" fill="none"/><path d="M932.8 470.3H1139.3" stroke="#ff6d5a" stroke-width="2" fill="none"/><path d="M1137.2 463.7L1144.8 470.3L1137.2 476.9Z" fill="#ff6d5a" stroke="#ff6d5a" stroke-width="1.2" stroke-linejoin="round"/><path d="M1252.1 470.3H1410.4" stroke="#ff6d5a" stroke-width="2" fill="none"/><path d="M1408.3 463.7L1415.9 470.3L1408.3 476.9Z" fill="#ff6d5a" stroke="#ff6d5a" stroke-width="1.2" stroke-linejoin="round"/><path d="M1523.2 470.3H1572.0" stroke="#c1c6d3" stroke-width="2" fill="none"/><path d="M453.2 390.7C525.2 390.7 523.2 230.9 595.2 230.9" stroke="#ff6d5a" stroke-width="2" fill="none"/><path d="M594.1 224.3L601.7 230.9L594.1 237.5Z" fill="#ff6d5a" stroke="#ff6d5a" stroke-width="1.2" stroke-linejoin="round"/><path d="M453.2 390.7C573.2 390.7 571.4 470.3 691.4 470.3" stroke="#c1c6d3" stroke-width="2" fill="none"/><path d="M690.3 463.7L697.9 470.3L690.3 476.9Z" fill="#c1c6d3" stroke="#c1c6d3" stroke-width="1.2" stroke-linejoin="round"/><path d="M837.6 524V574M885.5 524V574" stroke="#8b8daa" stroke-width="2" fill="none"/><path d="M742 524C742 575 694.2 573 694.2 624" stroke="#8b8daa" stroke-width="2" fill="none" stroke-dasharray="9 7" stroke-dashoffset="8"/><path d="M698.3 598.5Q694.8 607 694.2 624" stroke="#8b8daa" stroke-width="2" fill="none"/></svg>
<svg width="1907" height="897" style="left:0;top:0"><rect x="607.20" y="184.00" width="93.80" height="93.80" rx="7" fill="#414244" stroke="#c3c8d6" stroke-width="2"/><rect x="602.20" y="222.90" width="8" height="16" fill="#c1c6d3"/><circle cx="701.40" cy="230.90" r="7.95" fill="#c1c6d3"/><rect x="846.90" y="184.00" width="93.80" height="93.80" rx="7" fill="#414244" stroke="#c3c8d6" stroke-width="2"/><rect x="841.90" y="222.90" width="8" height="16" fill="#c1c6d3"/><circle cx="941.10" cy="230.90" r="7.95" fill="#c1c6d3"/><rect x="1054.30" y="184.00" width="93.80" height="93.80" rx="7" fill="#414244" stroke="#c3c8d6" stroke-width="2"/><rect x="1049.30" y="222.90" width="8" height="16" fill="#c1c6d3"/><circle cx="1148.50" cy="230.90" r="7.95" fill="#c1c6d3"/><rect x="1261.30" y="184.00" width="93.80" height="93.80" rx="7" fill="#414244" stroke="#c3c8d6" stroke-width="2"/><rect x="1256.30" y="222.90" width="8" height="16" fill="#c1c6d3"/><circle cx="1355.50" cy="230.90" r="7.95" fill="#c1c6d3"/><rect x="1485.20" y="184.00" width="93.80" height="93.80" rx="7" fill="#414244" stroke="#c3c8d6" stroke-width="2"/><rect x="1480.20" y="222.90" width="8" height="16" fill="#c1c6d3"/><circle cx="1579.40" cy="230.90" r="7.95" fill="#c1c6d3"/><path d="M387.40 343.80H439.20A7 7 0 0 1 446.20 350.80V430.60A7 7 0 0 1 439.20 437.60H387.40A35 35 0 0 1 352.40 402.60V378.80A35 35 0 0 1 387.40 343.80Z" fill="#414244" stroke="#c3c8d6" stroke-width="2"/><circle cx="446.60" cy="390.70" r="7.95" fill="#c1c6d3"/><rect x="703.40" y="423.45" width="221.40" height="93.80" rx="7" fill="#414244" stroke="#c3c8d6" stroke-width="2"/><rect x="698.40" y="462.35" width="8" height="16" fill="#c1c6d3"/><circle cx="925.20" cy="470.35" r="7.95" fill="#c1c6d3"/><rect x="1150.30" y="423.45" width="93.80" height="93.80" rx="7" fill="#414244" stroke="#c3c8d6" stroke-width="2"/><rect x="1145.30" y="462.35" width="8" height="16" fill="#c1c6d3"/><circle cx="1244.50" cy="470.35" r="7.95" fill="#c1c6d3"/><rect x="1421.40" y="423.45" width="93.80" height="93.80" rx="7" fill="#414244" stroke="#c3c8d6" stroke-width="2"/><rect x="1416.40" y="462.35" width="8" height="16" fill="#c1c6d3"/><circle cx="1515.60" cy="470.35" r="7.95" fill="#c1c6d3"/><circle cx="694.2" cy="669.6" r="39.1" fill="#2a2b38" stroke="#85868c" stroke-width="1.600"/><circle cx="694.2" cy="669.7" r="15.1" fill="#f55036"/></svg>
<svg width="20" height="22" viewBox="0 0 20 22" style="left:684.200px;top:658.700px" fill="none" stroke="#fff" stroke-width="2.300" stroke-linecap="round"><circle cx="10" cy="8.300" r="5.100"/><path d="M15.100 8.300v6.200a5.100 5.100 0 0 1-8.400 3.900"/></svg>
<div class="a" style="left:736.0px;top:511.9px;width:11.9px;height:11.9px;background:#8b8daa;transform:rotate(45deg)"></div>
<div class="a" style="left:831.6px;top:511.9px;width:11.9px;height:11.9px;background:#8b8daa;transform:rotate(45deg)"></div>
<div class="a" style="left:879.5px;top:511.9px;width:11.9px;height:11.9px;background:#8b8daa;transform:rotate(45deg)"></div>
<div class="a" style="left:688.1px;top:624.0px;width:12.2px;height:12.2px;background:#8b8daa;transform:rotate(45deg)"></div>
<svg width="12" height="8" style="left:736px;top:524px"><path d="M6 0.500L11 6.500H1Z" fill="#8b8daa"/></svg>
<div class="pb" style="left:1634.85px;top:220.05px;border-color:#c5cad7"></div>
<svg width="12" height="12" style="left:1639.7px;top:224.9px"><path d="M6 1.600v8.800M1.600 6h8.800" stroke="#fff" stroke-width="1.150" fill="none"/></svg>
<div class="pb" style="left:1570.85px;top:459.50px;border-color:#c5cad7"></div>
<svg width="12" height="12" style="left:1575.7px;top:464.3px"><path d="M6 1.600v8.800M1.600 6h8.800" stroke="#fff" stroke-width="1.150" fill="none"/></svg>
<div class="pb" style="left:827.05px;top:573.05px;border-color:#8d8eac"></div>
<svg width="12" height="12" style="left:831.9px;top:577.9px"><path d="M6 1.600v8.800M1.600 6h8.800" stroke="#fff" stroke-width="1.150" fill="none"/></svg>
<div class="pb" style="left:874.95px;top:573.05px;border-color:#8d8eac"></div>
<svg width="12" height="12" style="left:879.8px;top:577.9px"><path d="M6 1.600v8.800M1.600 6h8.800" stroke="#fff" stroke-width="1.150" fill="none"/></svg>
<div class="eb" style="left:497.5px;top:297.9px"></div>
<svg class="ic" viewBox="0 0 24 24" width="15" height="15" style="left:503.20px;top:303.70px;stroke:#e3e5ec;stroke-width:1.8"><path d="M5 12h14M12 5v14"/></svg>
<div class="eb" style="left:532.5px;top:297.9px"></div>
<svg class="ic" viewBox="0 0 24 24" width="15.5" height="15.5" style="left:537.95px;top:303.45px;stroke:#e3e5ec;stroke-width:1.8"><path d="M3 6h18"/><path d="M19 6v14c0 1-1 2-2 2H7c-1 0-2-1-2-2V6"/><path d="M8 6V4c0-1 1-2 2-2h4c1 0 2 1 2 2v2"/><path d="M10 11v6M14 11v6"/></svg>
<div class="eb" style="left:1008.2px;top:457.1px"></div>
<svg class="ic" viewBox="0 0 24 24" width="15" height="15" style="left:1014.00px;top:462.85px;stroke:#e3e5ec;stroke-width:1.8"><path d="M5 12h14M12 5v14"/></svg>
<div class="eb" style="left:1043.2px;top:457.1px"></div>
<svg class="ic" viewBox="0 0 24 24" width="15.5" height="15.5" style="left:1048.75px;top:462.60px;stroke:#e3e5ec;stroke-width:1.8"><path d="M3 6h18"/><path d="M19 6v14c0 1-1 2-2 2H7c-1 0-2-1-2-2V6"/><path d="M8 6V4c0-1 1-2 2-2h4c1 0 2 1 2 2v2"/><path d="M10 11v6M14 11v6"/></svg>
<div class="eb" style="left:1303.5px;top:457.1px"></div>
<svg class="ic" viewBox="0 0 24 24" width="15" height="15" style="left:1309.20px;top:462.85px;stroke:#e3e5ec;stroke-width:1.8"><path d="M5 12h14M12 5v14"/></svg>
<div class="eb" style="left:1338.5px;top:457.1px"></div>
<svg class="ic" viewBox="0 0 24 24" width="15.5" height="15.5" style="left:1343.95px;top:462.60px;stroke:#e3e5ec;stroke-width:1.8"><path d="M3 6h18"/><path d="M19 6v14c0 1-1 2-2 2H7c-1 0-2-1-2-2V6"/><path d="M8 6V4c0-1 1-2 2-2h4c1 0 2 1 2 2v2"/><path d="M10 11v6M14 11v6"/></svg>
<svg width="44" height="44" viewBox="-22 -22 44 44" style="left:632.1px;top:208.9px" fill="none" stroke="#ff9b21" stroke-width="4.2"><path d="M-3.400 -18.100h-2.400a5.100 5.100 0 0 0 -5.100 5.100v6.200c0 3.800 -2.400 6.800 -6.400 6.800h-2.100 h2.100c4 0 6.400 3 6.400 6.800v6.200a5.100 5.100 0 0 0 5.100 5.100h2.400"/><path d="M3.400 -18.100h2.400a5.100 5.100 0 0 1 5.100 5.100v6.200c0 3.800 2.400 6.800 6.400 6.800h2.100 h-2.100c-4 0 -6.400 3 -6.400 6.800v6.200a5.100 5.100 0 0 1 -5.100 5.100h-2.400"/></svg>
<svg width="44" height="44" viewBox="-22 -22 44 44" style="left:1079.2px;top:208.9px" fill="none" stroke="#ff9b21" stroke-width="4.2"><path d="M-3.400 -18.100h-2.400a5.100 5.100 0 0 0 -5.100 5.100v6.200c0 3.800 -2.400 6.800 -6.400 6.800h-2.100 h2.100c4 0 6.400 3 6.400 6.800v6.200a5.100 5.100 0 0 0 5.100 5.100h2.400"/><path d="M3.400 -18.100h2.400a5.100 5.100 0 0 1 5.100 5.100v6.200c0 3.800 2.400 6.800 6.400 6.800h2.100 h-2.100c-4 0 -6.400 3 -6.400 6.800v6.200a5.100 5.100 0 0 1 -5.100 5.100h-2.400"/></svg>
<svg width="44" height="44" viewBox="-22 -22 44 44" style="left:1286.2px;top:208.9px" fill="none" stroke="#ff9b21" stroke-width="4.2"><path d="M-3.400 -18.100h-2.400a5.100 5.100 0 0 0 -5.100 5.100v6.200c0 3.800 -2.400 6.800 -6.400 6.800h-2.100 h2.100c4 0 6.400 3 6.400 6.800v6.200a5.100 5.100 0 0 0 5.100 5.100h2.400"/><path d="M3.400 -18.100h2.400a5.100 5.100 0 0 1 5.100 5.100v6.200c0 3.800 2.400 6.800 6.400 6.800h2.100 h-2.100c-4 0 -6.400 3 -6.400 6.800v6.200a5.100 5.100 0 0 1 -5.100 5.100h-2.400"/></svg>
<svg width="44" height="44" viewBox="-22 -22 44 44" style="left:1175.2px;top:448.3px" fill="none" stroke="#ff9b21" stroke-width="4.2"><path d="M-3.400 -18.100h-2.400a5.100 5.100 0 0 0 -5.100 5.100v6.200c0 3.800 -2.400 6.800 -6.400 6.800h-2.100 h2.100c4 0 6.400 3 6.400 6.800v6.200a5.100 5.100 0 0 0 5.100 5.100h2.400"/><path d="M3.400 -18.100h2.400a5.100 5.100 0 0 1 5.100 5.100v6.200c0 3.800 2.400 6.800 6.400 6.800h2.100 h-2.100c-4 0 -6.400 3 -6.400 6.800v6.200a5.100 5.100 0 0 1 -5.100 5.100h-2.400"/></svg>
<svg width="42" height="38" viewBox="0 0 42 38" style="left:873.900px;top:212.800px"><g fill="#6277b6">
<path d="M0 0H13V13.800H27.100V20.400H17.350A4.050 4.050 0 0 0 17.350 28.500H27.100V36.300H0Z"/><path d="M15.400 0L27.100 11H15.400Z"/></g>
<path d="M17.300 24.300H36.500" stroke="#6277b6" stroke-width="3.900" stroke-linecap="round" fill="none"/>
<path d="M30.900 17.800L37.400 24.300L30.900 30.800" stroke="#6277b6" stroke-width="4" stroke-linecap="round" stroke-linejoin="miter" fill="none"/></svg>
<svg width="31" height="41" viewBox="0 0 31 41" style="left:1516.900px;top:210.700px">
<path d="M2.600 0H18.700L30.400 11.400V37.800a2.600 2.600 0 0 1 -2.600 2.600H2.600A2.600 2.600 0 0 1 0 37.800V2.600A2.600 2.600 0 0 1 2.600 0Z" fill="#2bad4e"/>
<path d="M18.700 0L30.400 11.400H21.200a2.500 2.500 0 0 1 -2.500 -2.500Z" fill="#66bd80"/>
<rect x="8.100" y="19.500" width="13.400" height="12.600" fill="#fff"/>
<g fill="#2bad4e"><rect x="9.700" y="21.400" width="4.100" height="2"/><rect x="15.800" y="21.400" width="4.100" height="2"/><rect x="9.700" y="24.800" width="4.100" height="2"/><rect x="15.800" y="24.800" width="4.100" height="2"/><rect x="9.700" y="28.200" width="4.100" height="2"/><rect x="15.800" y="28.200" width="4.100" height="2"/></g></svg>
<svg viewBox="52 42 88 66" width="40.100" height="30.400" style="left:1447.900px;top:454.900px">
<path fill="#4285f4" d="M58 108h14V74L52 59v43c0 3.320 2.690 6 6 6"/><path fill="#34a853" d="M120 108h14c3.320 0 6-2.690 6-6V59l-20 15"/>
<path fill="#fbbc04" d="M120 48v26l20-15v-8c0-7.420-8.470-11.650-14.400-7.200"/><path fill="#ea4335" d="M72 74V48l24 18 24-18v26L96 92"/>
<path fill="#dd4233" d="M52 51v8l20 15V48l-5.600-4.200c-5.940-4.450-14.400-.22-14.400 7.200"/></svg>
<svg width="58" height="56" viewBox="0 0 58 56" style="left:370px;top:362px" fill="none" stroke="#e6e8ef" stroke-width="4" stroke-linecap="butt">
<path d="M18.730 37.140L25.590 26.020A7.700 7.700 0 1 1 36.160 21.420"/><g transform="rotate(120 28.860 31.110)"><path d="M18.730 37.140L25.590 26.020A7.700 7.700 0 1 1 36.160 21.420"/></g><g transform="rotate(240 28.860 31.110)"><path d="M18.730 37.140L25.590 26.020A7.700 7.700 0 1 1 36.160 21.420"/></g>
<g fill="#e6e8ef" stroke="none"><circle cx="28.840" cy="19.040" r="4.100"/><circle cx="18.730" cy="37.140" r="4.100"/><circle cx="39.010" cy="37.140" r="4.100"/></g></svg>
<svg viewBox="0 0 640 512" width="40.100" height="32.100" style="left:721.900px;top:454.200px" fill="#fff"><path d="M32,224H64V416H32A31.962,31.962,0,0,1,0,384V256A31.962,31.962,0,0,1,32,224Zm512-48V448a64.063,64.063,0,0,1-64,64H160a64.063,64.063,0,0,1-64-64V176a79.974,79.974,0,0,1,80-80H288V32a32,32,0,0,1,64,0V96H464A79.974,79.974,0,0,1,544,176ZM264,256a40,40,0,1,0-40,40A39.997,39.997,0,0,0,264,256Zm-8,128H192v32h64Zm96,0H288v32h64ZM456,256a40,40,0,1,0-40,40A39.997,39.997,0,0,0,456,256Zm-8,128H384v32h64ZM640,256V384a31.962,31.962,0,0,1-32,32H576V224h32A31.962,31.962,0,0,1,640,256Z"/></svg>
<svg viewBox="0 0 24 24" width="17.900" height="17.900" style="left:318px;top:380.700px" fill="#ff6d5a" stroke="#ff6d5a" stroke-width="2" stroke-linejoin="round"><path d="M4 14a1 1 0 0 1-.78-1.630l9.900-10.200a.5.5 0 0 1 .86.460l-1.920 6.020A1 1 0 0 0 13 10h7a1 1 0 0 1 .78 1.630l-9.900 10.200a.5.5 0 0 1-.86-.460l1.920-6.020A1 1 0 0 0 11 14z"/></svg>
<div class="t" style="left:573.35px;top:286.00px;font-size:15.7px;letter-spacing:0.502px;color:#ffffff;-webkit-text-stroke:0.35px #ffffff;">Convert to Binary File</div>
<div class="t" style="left:832.10px;top:286.00px;font-size:15.7px;letter-spacing:0.570px;color:#ffffff;-webkit-text-stroke:0.35px #ffffff;">Extract from File</div>
<div class="t" style="left:841.80px;top:310.70px;font-size:12.1px;letter-spacing:0.479px;color:#969cae;">Extract From PDF</div>
<div class="t" style="left:1043.45px;top:286.00px;font-size:15.7px;letter-spacing:0.294px;color:#ffffff;-webkit-text-stroke:0.35px #ffffff;">Display Full File</div>
<div class="t" style="left:1225.70px;top:286.00px;font-size:15.7px;letter-spacing:0.740px;color:#ffffff;-webkit-text-stroke:0.35px #ffffff;">Extract Columns from</div>
<div class="t" style="left:1294.80px;top:306.00px;font-size:15.7px;letter-spacing:0.500px;color:#ffffff;-webkit-text-stroke:0.35px #ffffff;">File</div>
<div class="t" style="left:1454.20px;top:286.00px;font-size:15.7px;letter-spacing:0.703px;color:#ffffff;-webkit-text-stroke:0.35px #ffffff;">Append row in sheet</div>
<div class="t" style="left:1489.35px;top:310.70px;font-size:12.1px;letter-spacing:0.733px;color:#969cae;">append: sheet</div>
<div class="t" style="left:363.65px;top:445.70px;font-size:15.7px;letter-spacing:0.876px;color:#ffffff;-webkit-text-stroke:0.35px #ffffff;">Webhook</div>
<div class="t" style="left:1123.70px;top:525.80px;font-size:15.7px;letter-spacing:0.587px;color:#ffffff;-webkit-text-stroke:0.35px #ffffff;">Split messages and</div>
<div class="t" style="left:1112.85px;top:545.80px;font-size:15.7px;letter-spacing:0.608px;color:#ffffff;-webkit-text-stroke:0.35px #ffffff;">convert to Binary Files</div>
<div class="t" style="left:1406.70px;top:525.80px;font-size:15.7px;letter-spacing:0.413px;color:#ffffff;-webkit-text-stroke:0.35px #ffffff;">Send a message</div>
<div class="t" style="left:1423.50px;top:550.30px;font-size:12.1px;letter-spacing:0.628px;color:#969cae;">send: message</div>
<div class="t" style="left:631.00px;top:717.00px;font-size:15.7px;letter-spacing:0.489px;color:#ffffff;-webkit-text-stroke:0.35px #ffffff;">Groq Chat Model</div>
<div class="t" style="left:777.90px;top:460.70px;font-size:16.2px;letter-spacing:0.407px;color:#ffffff;-webkit-text-stroke:0.35px #ffffff;">AI Agent</div>
<div class="a" style="left:458.3px;top:384.3px;width:33.2px;height:12.5px;background:#2d2e2e"></div>
<div class="t" style="left:459.90px;top:384.00px;font-size:12.2px;letter-spacing:-0.972px;color:#dde0e8;">POST</div>
<div class="a" style="left:706.1px;top:530.3px;width:71.6px;height:11.3px;background:#2c2d39"></div>
<div class="t" style="left:707.10px;top:529.50px;font-size:11.8px;letter-spacing:0.384px;color:#a7a7c3;">Chat Model</div>
<div class="t" style="left:772.2px;top:529.6px;font-size:14px;color:#ff6d5a">*</div>
<div class="a" style="left:813.9px;top:530.1px;width:47.2px;height:11.7px;background:#2c2d39"></div>
<div class="t" style="left:815.10px;top:529.10px;font-size:11.8px;letter-spacing:0.617px;color:#a7a7c3;">Memory</div>
<div class="a" style="left:873px;top:530.1px;width:24.9px;height:11.7px;background:#2c2d39"></div>
<div class="t" style="left:874.50px;top:529.10px;font-size:11.8px;letter-spacing:0.351px;color:#a7a7c3;">Tool</div>
<div class="a" style="left:675.9px;top:602.3px;width:35.8px;height:11.3px;background:#2c2d39"></div>
<div class="t" style="left:677.10px;top:601.00px;font-size:11.8px;letter-spacing:0.440px;color:#a7a7c3;">Model</div>
<div class="a" style="left:872.300px;top:792px;width:235px;height:51.500px;border-radius:5px;background:#ff6d5a"></div>
<svg width="260" height="130" viewBox="826 764 260 130" style="left:826px;top:764px;opacity:.36"><g fill="none" stroke="#b7b7b7" stroke-width="9.600" stroke-linecap="round" stroke-linejoin="round">
<path d="M877.800 779.500V822"/>
<path d="M864.800 803.400A16.300 16.300 0 1 0 870 832.300Q877.800 829 877.800 821"/>
<path d="M877.800 828.400H1046"/>
<circle cx="915.300" cy="810.500" r="15.400"/>
<circle cx="1046.200" cy="819" r="15.800"/>
<path d="M955 828V808M975 828V812M993.800 828V808M1011.300 828V806"/></g>
<g fill="#b7b7b7"><circle cx="907.900" cy="780.800" r="7"/><circle cx="923.300" cy="780.800" r="7"/><circle cx="948.200" cy="794.600" r="7"/><circle cx="963.600" cy="794.600" r="7"/></g></svg>
<div class="t" style="left:838.80px;top:836.70px;font-size:37.2px;letter-spacing:-0.065px;color:rgba(183,183,183,.36);font-weight:700;">mostaql.com</div>
<svg viewBox="0 0 24 24" width="20.500" height="20.500" style="left:898.200px;top:807.600px" fill="none" stroke="#f1f3f8" stroke-width="1.600" stroke-linecap="round" stroke-linejoin="round"><path d="M14 2v6a2 2 0 0 0 .245.960l5.510 10.080A2 2 0 0 1 18 22H6a2 2 0 0 1-1.755-2.960l5.510-10.080A2 2 0 0 0 10 8V2"/><path d="M6.453 15h11.094"/><path d="M8.500 2h7"/></svg>
<div class="t" style="left:925.80px;top:808.80px;font-size:17.1px;letter-spacing:1.410px;color:#eef1f7;-webkit-text-stroke:0.3px #eef1f7;">Execute workflow</div>
</div></body></html>
